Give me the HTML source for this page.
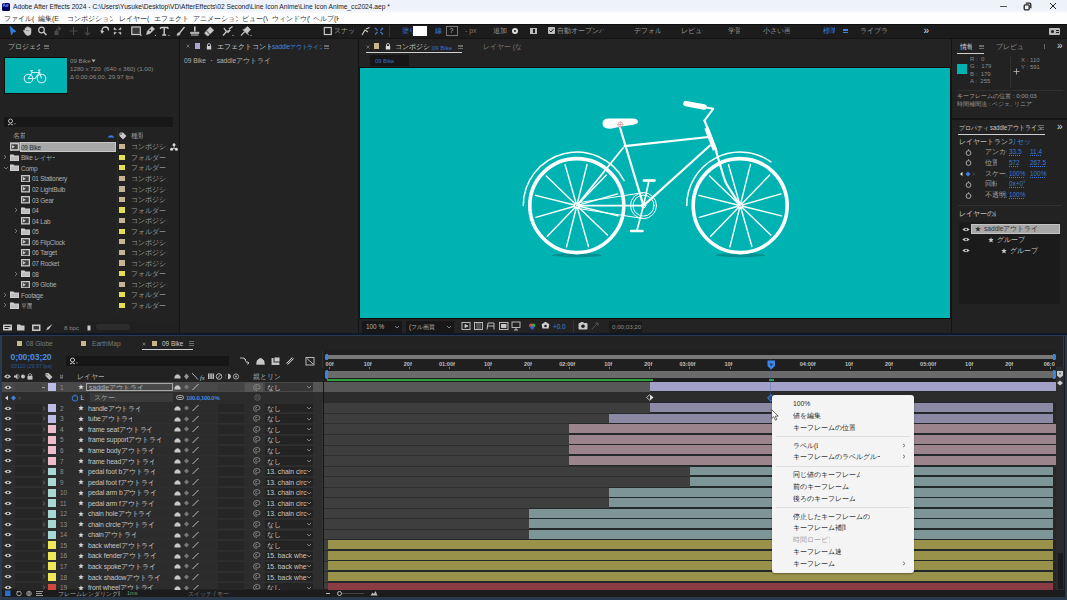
<!DOCTYPE html>
<html><head><meta charset="utf-8">
<style>
*{margin:0;padding:0;box-sizing:border-box}
html,body{width:1067px;height:600px;overflow:hidden;background:#111}
body{position:relative;font-family:"Liberation Sans",sans-serif;font-size:7px;color:#a8a8a8;line-height:1}
.a{position:absolute}
.t{position:absolute;white-space:nowrap;line-height:8px}
.blue{color:#4d8fe0}
</style></head><body>


<!-- TITLE BAR -->
<div class="a" style="left:0;top:0;width:1067px;height:23.5px;background:linear-gradient(#eef2fa 0px,#eef2fa 10px,#fefefe 13.5px,#fefefe 23.5px)"></div>
<div class="a" style="left:1.5px;top:2.5px;width:8px;height:8px;background:#00005b;border-radius:1.5px"></div>
<div class="t" style="left:2.6px;top:2.4px;font-size:4.6px;color:#9999ff;font-weight:bold;line-height:8px">Ae</div>
<div class="t" style="left:13px;top:2.5px;font-size:7.4px;color:#1a1a1a;transform-origin:0 0;transform:scaleX(0.9)">Adobe After Effects 2024 - C:\Users\Yusuke\Desktop\VD\AfterEffects\02 Second\Line Icon Anime\Line Icon Anime_cc2024.aep *</div>
<div class="a" style="left:999.5px;top:5.5px;width:7px;height:0.8px;background:#555"></div>
<svg class="a" style="left:1022.5px;top:1.5px" width="9" height="9" viewBox="0 0 9 9"><path d="M2.8 1.2H6.5Q7.8 1.2 7.8 2.5V6.2" fill="none" stroke="#222" stroke-width="1.3"/><rect x="1.2" y="2.8" width="5" height="5" rx="1" fill="none" stroke="#222" stroke-width="1.3"/></svg>
<svg class="a" style="left:1049px;top:2px" width="8" height="8" viewBox="0 0 8 8"><path d="M1 1L7 7M7 1L1 7" stroke="#222" stroke-width="1"/></svg>
<!-- MENU -->
<div class="t" style="width:29.5px;overflow:hidden;left:4px;top:14.5px;font-size:7px;color:#333">ファイル(F)</div>
<div class="t" style="width:20.5px;overflow:hidden;left:38px;top:14.5px;font-size:7px;color:#333">編集(E)</div>
<div class="t" style="width:45.5px;overflow:hidden;left:67px;top:14.5px;font-size:7px;color:#333">コンポジション(C)</div>
<div class="t" style="width:29.5px;overflow:hidden;left:119px;top:14.5px;font-size:7px;color:#333">レイヤー(L)</div>
<div class="t" style="width:34.5px;overflow:hidden;left:154px;top:14.5px;font-size:7px;color:#333">エフェクト(T)</div>
<div class="t" style="width:45.5px;overflow:hidden;left:192.5px;top:14.5px;font-size:7px;color:#333">アニメーション(A)</div>
<div class="t" style="width:25.5px;overflow:hidden;left:242px;top:14.5px;font-size:7px;color:#333">ビュー(V)</div>
<div class="t" style="width:37.5px;overflow:hidden;left:272px;top:14.5px;font-size:7px;color:#333">ウィンドウ(W)</div>
<div class="t" style="width:25.5px;overflow:hidden;left:313px;top:14.5px;font-size:7px;color:#333">ヘルプ(H)</div>

<!-- TOOLBAR -->
<div class="a" style="left:0;top:23.5px;width:1067px;height:15.5px;background:#1c1c1c;border-top:1px solid #0c0c0c"></div>
<svg class="a" style="left:0;top:24px" width="400" height="14" viewBox="0 0 400 14">
 <g fill="none" stroke="#c8c8c8" stroke-width="1.1">
  <path d="M10 2.5L16 7.5L13 8L11.5 11Z" fill="#2f7de1" stroke="#2f7de1" stroke-width="0.8"/>
  <path d="M25 7.5V4.8Q25 4 25.8 4Q26.5 4 26.5 4.8V6.5M26.5 6V3.5Q26.5 2.7 27.3 2.7Q28 2.7 28 3.5V6.2M28 6V3.8Q28 3 28.8 3Q29.5 3 29.5 3.8V6.5M29.5 6.3V4.8Q29.5 4.1 30.2 4.1Q31 4.1 31 4.8V8.5Q31 11.5 28 11.5Q26 11.5 25 9.5L23.5 7Q23.2 6.2 24 6.2Q24.6 6.2 25 7" fill="#c8c8c8" stroke-width="0.5"/>
  <circle cx="41.5" cy="6" r="2.8" stroke-width="1.2"/><path d="M43.5 8L46.5 11" stroke-width="1.5"/>
  <g stroke="#4a4a4a"><path d="M56 9Q55.5 4.5 60 4.5M58 2.5L60.5 4.5L58.5 6.5"/><rect x="55" y="7.5" width="3" height="3" fill="#4a4a4a"/><path d="M73.5 3V11M69.5 7H77.5"/><path d="M87.5 3V10.5M85 8.5L87.5 11L90 8.5"/></g>
  <path d="M102 8Q101.5 3 105.5 3Q108.5 3 108.5 6.5" stroke-width="1.3"/><path d="M100.5 6.5L102 9.5L104 7" fill="#c8c8c8" stroke-width="0.5"/>
  <path d="M114 3.5L116.5 5.5L114 5.8ZM121 3.5L118.5 5.5L121 5.8ZM114 10.5L116.5 8.5L114 8.2ZM121 10.5L118.5 8.5L121 8.2Z" fill="#c8c8c8" stroke-width="0.4"/>
  <rect x="131.8" y="3" width="8.5" height="7.5" fill="#3a3a3a" stroke-width="1.2"/><circle cx="141" cy="11.3" r="0.8" fill="#c8c8c8" stroke="none"/>
  <path d="M146.5 10.5L147.5 7L152 2.5L154.5 5L150 9.5Z" fill="#c8c8c8" stroke-width="0.6"/><circle cx="150.2" cy="6.3" r="0.9" fill="#1d1d1d" stroke="none"/><circle cx="155.5" cy="11.3" r="0.6" fill="#c8c8c8" stroke="none"/>
  <path d="M160.5 3.5H168M164.2 3.5V11M162.3 11H166.2M160.5 3.5V5M168 3.5V5" stroke-width="1.4"/><circle cx="169" cy="11.3" r="0.6" fill="#c8c8c8" stroke="none"/>
  <path d="M179.5 9L184.5 3" stroke-width="1.3"/><path d="M177 11.5Q177 9 179 8.5L180.3 9.7Q180 11.5 177 11.5Z" fill="#c8c8c8" stroke-width="0.5"/>
  <path d="M194.8 2.5V7.5" stroke-width="1.6"/><path d="M190.5 8.2H199V9.5H190.5Z" fill="#c8c8c8" stroke-width="0.6"/><path d="M191 11H198.5" stroke-width="1"/>
  <path d="M205 8.5L209.5 3.5Q210.3 2.8 211 3.5L213.2 5.7Q213.9 6.4 213.2 7.1L208.5 11.5Q207.8 12.2 207 11.5L205 9.8Q204.3 9.1 205 8.5Z" fill="#c8c8c8" stroke-width="0.5"/><path d="M206.5 7L210.5 11" stroke="#1d1d1d" stroke-width="0.8"/>
  <path d="M223 11.5L227.5 6.5M229 5L232.5 2.5M224 4L226.5 8" stroke-width="1.3"/><path d="M227 8L229.5 5.5L230.5 6.5L228 9Z" fill="#c8c8c8" stroke-width="0.5"/><circle cx="233" cy="11.3" r="0.6" fill="#c8c8c8" stroke="none"/>
  <path d="M241 11.5L244.8 7.7" stroke-width="1.1"/><path d="M243.5 6L247.5 2.5L250.5 5.5L247 9.5Z" fill="#c8c8c8" stroke-width="0.6"/><path d="M242.8 5.2L248.8 11.2" stroke-width="1"/><circle cx="251" cy="11.3" r="0.6" fill="#c8c8c8" stroke="none"/>
  <rect x="324.3" y="3.5" width="7" height="7" stroke-width="1.2"/>
  <path d="M362 11L365 6L368 8M366 5L369.5 3.5" stroke="#d0d0d0"/>
  <path d="M375 4L377.5 6.5M383 4L380.5 6.5M375 10.5L377.5 8M383 10.5L380.5 8" stroke="#3b7fd8"/>
 </g>
</svg>
<div class="t" style="width:21.5px;overflow:hidden;left:333.5px;top:27px;font-size:6.8px;color:#9a9a9a">スナップ</div>
<div class="a" style="left:389px;top:25px;width:0.8px;height:12px;background:#333"></div>
<div class="t" style="width:11.5px;overflow:hidden;left:402px;top:27px;font-size:6.8px;color:#3b82e0">塗り</div>
<div class="a" style="left:413px;top:26px;width:14px;height:10px;background:#fff"></div>
<div class="t" style="width:6.5px;overflow:hidden;left:435px;top:27px;font-size:6.8px;color:#3b82e0">線</div>
<div class="a" style="left:446px;top:26px;width:11.5px;height:10px;border:1px solid #777;background:#1a1a1a"></div>
<div class="t" style="left:449.5px;top:27px;font-size:7px;color:#bbb">?</div>
<div class="t" style="left:465px;top:27px;font-size:6.8px;color:#777">- px</div>
<div class="t" style="width:15.5px;overflow:hidden;left:493px;top:27px;font-size:6.8px;color:#999">追加 :</div>
<div class="a" style="left:512px;top:28px;width:6px;height:6px;border-radius:50%;background:#ddd"></div>
<div class="a" style="left:514px;top:30px;width:2px;height:2px;border-radius:50%;background:#1d1d1d"></div>
<div class="a" style="left:530px;top:27.5px;width:7px;height:6px;background:#bbb"></div>
<div class="a" style="left:532.5px;top:29px;width:2px;height:4px;background:#1d1d1d"></div>
<div class="a" style="left:547.5px;top:27px;width:7px;height:7px;background:#c0c0c0;border-radius:1px"></div>
<svg class="a" style="left:547.5px;top:27px" width="7" height="7"><path d="M1.5 3.5L3 5L5.5 2" stroke="#1d1d1d" stroke-width="1" fill="none"/></svg>
<div class="t" style="width:46.5px;overflow:hidden;left:557px;top:27px;font-size:6.8px;color:#999">自動オープンパネル</div>
<div class="t" style="width:26.5px;overflow:hidden;left:634px;top:27px;font-size:6.8px;color:#999">デフォルト</div>
<div class="t" style="width:21.5px;overflow:hidden;left:681px;top:27px;font-size:6.8px;color:#999">レビュー</div>
<div class="t" style="width:11.5px;overflow:hidden;left:728px;top:27px;font-size:6.8px;color:#999">学習</div>
<div class="t" style="width:26.5px;overflow:hidden;left:763px;top:27px;font-size:6.8px;color:#999">小さい画面</div>
<div class="t" style="width:11.5px;overflow:hidden;left:823px;top:27px;font-size:6.8px;color:#3b82e0">標準</div>
<div class="a" style="left:842.5px;top:28.5px;width:5px;height:4.5px;border-top:0.8px solid #3b82e0;border-bottom:0.8px solid #3b82e0"></div><div class="a" style="left:842.5px;top:30.4px;width:5px;height:0.8px;background:#3b82e0"></div>
<div class="t" style="width:26.5px;overflow:hidden;left:860px;top:27px;font-size:6.8px;color:#999">ライブラリ</div>
<div class="t" style="left:923.5px;top:25.5px;font-size:10px;color:#ddd;line-height:10px">»</div>
<div class="a" style="left:1049px;top:28px;width:11px;height:7px;background:#bbb;border-radius:1px"></div>
<div class="a" style="left:1051px;top:30px;width:3px;height:3px;background:#1d1d1d;border-radius:50%"></div>
<div class="a" style="left:1056px;top:29.5px;width:3px;height:1px;background:#1d1d1d"></div>
<div class="a" style="left:1056px;top:31.5px;width:3px;height:1px;background:#1d1d1d"></div>

<!-- PANEL AREA BG (gaps) -->
<div class="a" style="left:0;top:38px;width:1067px;height:297px;background:#141414"></div>


<!-- PROJECT PANEL -->
<div class="a" style="left:0;top:39px;width:178.8px;height:295px;background:#222222"></div>
<div class="t" style="width:31.5px;overflow:hidden;left:8px;top:43.00px;font-size:7px;color:#b0b0b0">プロジェクト</div>
<div class="a" style="left:44px;top:44.5px;width:5px;height:4.5px;border-top:0.8px solid #6a6a6a;border-bottom:0.8px solid #6a6a6a"></div><div class="a" style="left:44px;top:46.4px;width:5px;height:0.8px;background:#6a6a6a"></div>
<div class="a" style="left:4px;top:57px;width:63.5px;height:37px;background:#0d0d0d"></div>
<div class="a" style="left:5px;top:58px;width:61.5px;height:35px;background:#00b3b3"></div>
<svg class="a" style="left:23px;top:68px" width="24" height="16" viewBox="0 0 24 16"><g fill="none" stroke="#c8f0f0" stroke-width="1.1"><circle cx="5.5" cy="10.5" r="4.3"/><circle cx="18.5" cy="10.5" r="4.3"/><path d="M5.5 10.5L9 4.5H16.5L12 10.5ZM9 4.5L8.3 2.5M7 2.5H10M16.5 4.5L18.5 10.5M15.8 2.5L16.5 4.5M15 2H17.5"/></g></svg>
<div class="t" style="left:70px;top:57.00px;font-size:6.2px;color:#8a8a8a">09 Bike</div><svg class="a" style="left:91px;top:59px" width="5" height="4" viewBox="0 0 5 4"><path d="M0.5 0.5H4.5L2.5 3.5Z" fill="#aaa"/></svg>
<div class="t" style="left:70px;top:65.00px;font-size:6.2px;color:#8a8a8a;letter-spacing:0px">1280 x 720&nbsp; (640 x 360) (1.00)</div>
<div class="t" style="left:70px;top:73.00px;font-size:6.2px;color:#8a8a8a;letter-spacing:0px">Δ 0;00;06;00, 29.97 fps</div>
<div class="a" style="left:4px;top:117px;width:169px;height:9.7px;background:#171717"></div>
<svg class="a" style="left:7px;top:118px" width="10" height="8" viewBox="0 0 10 8"><circle cx="3.5" cy="3" r="2" fill="none" stroke="#bbb" stroke-width="1"/><path d="M1 7Q3.5 4.5 6 7" fill="none" stroke="#bbb" stroke-width="1"/><path d="M7 5.5L8 6.5L9 5.5" fill="#bbb"/></svg>
<div class="t" style="width:11.5px;overflow:hidden;left:13px;top:132.00px;font-size:7px;color:#a0a0a0">名前</div>
<svg class="a" style="left:107px;top:133px" width="8" height="5" viewBox="0 0 8 5"><path d="M0.5 4.5Q4 0 7.5 4.5Z" fill="#3b82e0"/></svg>
<svg class="a" style="left:119px;top:131.5px" width="8" height="8" viewBox="0 0 8 8"><path d="M0.5 1.5V4L4 7.5L7.5 4L4 0.5H1.5Z" fill="#c8c8c8"/><circle cx="2" cy="2" r="0.7" fill="#212121"/></svg>
<div class="t" style="width:11.5px;overflow:hidden;left:131px;top:132.00px;font-size:7px;color:#a0a0a0">種類</div>
<div class="a" style="left:117px;top:128px;width:0.6px;height:186px;background:#2a2a2a"></div>

<div class="a" style="left:10px;top:142.10px;width:9.5px;height:9px;background:#8c8c8c"></div>
<div class="a" style="left:20px;top:141.60px;width:96px;height:10px;background:#a8a8a8;border:0.7px solid #c8c8c8"></div>
<svg class="a" style="left:10.00px;top:143.10px" width="9" height="7.5" viewBox="0 0 9 7.5"><rect x="0" y="0" width="9" height="7.5" fill="#c8c8c8"/><rect x="1.3" y="1.3" width="6.4" height="4.9" fill="#3c3c3c"/><path d="M2 2V5.5L5 3.8Z" fill="#c8c8c8"/></svg>
<div class="t" style="left:21.00px;top:143.60px;font-size:6.4px;color:#2a2a2a;letter-spacing:-0.2px">09 Bike</div>
<div class="a" style="left:119px;top:144.00px;width:5.5px;height:5.2px;background:#c4b597"></div>
<div class="t" style="left:131px;top:143.30px;font-size:7px;color:#9a9a9a;width:37px;overflow:hidden">コンポジション</div>
<svg class="a" style="left:3.00px;top:154.18px" width="4" height="6" viewBox="0 0 4 6"><path d="M1 1L3 3L1 5" fill="none" stroke="#8a8a8a" stroke-width="0.8"/></svg>
<svg class="a" style="left:10.00px;top:153.68px" width="9" height="7" viewBox="0 0 9 7"><path d="M0 0.5H3.5L4.3 1.5H9V7H0Z" fill="#d2d2d2"/><path d="M0.8 2.5H8.2V6.2H0.8Z" fill="#bcbcbc"/></svg>
<div class="t" style="width:33.7px;overflow:hidden;left:21.00px;top:154.18px;font-size:6.4px;color:#b0b0b0;letter-spacing:-0.2px">Bike レイヤー</div>
<div class="a" style="left:119px;top:154.58px;width:5.5px;height:5.2px;background:#e3df55"></div>
<div class="t" style="left:131px;top:153.88px;font-size:7px;color:#9a9a9a;width:37px;overflow:hidden">フォルダー</div>
<svg class="a" style="left:2.50px;top:165.76px" width="6" height="4" viewBox="0 0 6 4"><path d="M1 1L3 3L5 1" fill="none" stroke="#8a8a8a" stroke-width="0.8"/></svg>
<svg class="a" style="left:10.00px;top:164.26px" width="9" height="7" viewBox="0 0 9 7"><path d="M0 0.5H3.5L4.3 1.5H9V7H0Z" fill="#d2d2d2"/><path d="M0.8 2.5H8.2V6.2H0.8Z" fill="#bcbcbc"/></svg>
<div class="t" style="left:21.00px;top:164.76px;font-size:6.4px;color:#b0b0b0;letter-spacing:-0.2px">Comp</div>
<div class="a" style="left:119px;top:165.16px;width:5.5px;height:5.2px;background:#e3df55"></div>
<div class="t" style="left:131px;top:164.46px;font-size:7px;color:#9a9a9a;width:37px;overflow:hidden">フォルダー</div>
<svg class="a" style="left:21.00px;top:174.84px" width="9" height="7.5" viewBox="0 0 9 7.5"><rect x="0" y="0" width="9" height="7.5" fill="#c8c8c8"/><rect x="1.3" y="1.3" width="6.4" height="4.9" fill="#3c3c3c"/><path d="M2 2V5.5L5 3.8Z" fill="#c8c8c8"/></svg>
<div class="t" style="left:32.00px;top:175.34px;font-size:6.4px;color:#b0b0b0;letter-spacing:-0.2px">01 Stationery</div>
<div class="a" style="left:119px;top:175.74px;width:5.5px;height:5.2px;background:#c4b597"></div>
<div class="t" style="left:131px;top:175.04px;font-size:7px;color:#9a9a9a;width:37px;overflow:hidden">コンポジション</div>
<svg class="a" style="left:21.00px;top:185.42px" width="9" height="7.5" viewBox="0 0 9 7.5"><rect x="0" y="0" width="9" height="7.5" fill="#c8c8c8"/><rect x="1.3" y="1.3" width="6.4" height="4.9" fill="#3c3c3c"/><path d="M2 2V5.5L5 3.8Z" fill="#c8c8c8"/></svg>
<div class="t" style="left:32.00px;top:185.92px;font-size:6.4px;color:#b0b0b0;letter-spacing:-0.2px">02 LightBulb</div>
<div class="a" style="left:119px;top:186.32px;width:5.5px;height:5.2px;background:#c4b597"></div>
<div class="t" style="left:131px;top:185.62px;font-size:7px;color:#9a9a9a;width:37px;overflow:hidden">コンポジション</div>
<svg class="a" style="left:21.00px;top:196.00px" width="9" height="7.5" viewBox="0 0 9 7.5"><rect x="0" y="0" width="9" height="7.5" fill="#c8c8c8"/><rect x="1.3" y="1.3" width="6.4" height="4.9" fill="#3c3c3c"/><path d="M2 2V5.5L5 3.8Z" fill="#c8c8c8"/></svg>
<div class="t" style="left:32.00px;top:196.50px;font-size:6.4px;color:#b0b0b0;letter-spacing:-0.2px">03 Gear</div>
<div class="a" style="left:119px;top:196.90px;width:5.5px;height:5.2px;background:#c4b597"></div>
<div class="t" style="left:131px;top:196.20px;font-size:7px;color:#9a9a9a;width:37px;overflow:hidden">コンポジション</div>
<svg class="a" style="left:14.00px;top:207.08px" width="4" height="6" viewBox="0 0 4 6"><path d="M1 1L3 3L1 5" fill="none" stroke="#8a8a8a" stroke-width="0.8"/></svg>
<svg class="a" style="left:21.00px;top:206.58px" width="9" height="7" viewBox="0 0 9 7"><path d="M0 0.5H3.5L4.3 1.5H9V7H0Z" fill="#d2d2d2"/><path d="M0.8 2.5H8.2V6.2H0.8Z" fill="#bcbcbc"/></svg>
<div class="t" style="left:32.00px;top:207.08px;font-size:6.4px;color:#b0b0b0;letter-spacing:-0.2px">04</div>
<div class="a" style="left:119px;top:207.48px;width:5.5px;height:5.2px;background:#e3df55"></div>
<div class="t" style="left:131px;top:206.78px;font-size:7px;color:#9a9a9a;width:37px;overflow:hidden">フォルダー</div>
<svg class="a" style="left:21.00px;top:217.16px" width="9" height="7.5" viewBox="0 0 9 7.5"><rect x="0" y="0" width="9" height="7.5" fill="#c8c8c8"/><rect x="1.3" y="1.3" width="6.4" height="4.9" fill="#3c3c3c"/><path d="M2 2V5.5L5 3.8Z" fill="#c8c8c8"/></svg>
<div class="t" style="left:32.00px;top:217.66px;font-size:6.4px;color:#b0b0b0;letter-spacing:-0.2px">04 Lab</div>
<div class="a" style="left:119px;top:218.06px;width:5.5px;height:5.2px;background:#c4b597"></div>
<div class="t" style="left:131px;top:217.36px;font-size:7px;color:#9a9a9a;width:37px;overflow:hidden">コンポジション</div>
<svg class="a" style="left:14.00px;top:228.24px" width="4" height="6" viewBox="0 0 4 6"><path d="M1 1L3 3L1 5" fill="none" stroke="#8a8a8a" stroke-width="0.8"/></svg>
<svg class="a" style="left:21.00px;top:227.74px" width="9" height="7" viewBox="0 0 9 7"><path d="M0 0.5H3.5L4.3 1.5H9V7H0Z" fill="#d2d2d2"/><path d="M0.8 2.5H8.2V6.2H0.8Z" fill="#bcbcbc"/></svg>
<div class="t" style="left:32.00px;top:228.24px;font-size:6.4px;color:#b0b0b0;letter-spacing:-0.2px">05</div>
<div class="a" style="left:119px;top:228.64px;width:5.5px;height:5.2px;background:#e3df55"></div>
<div class="t" style="left:131px;top:227.94px;font-size:7px;color:#9a9a9a;width:37px;overflow:hidden">フォルダー</div>
<svg class="a" style="left:21.00px;top:238.32px" width="9" height="7.5" viewBox="0 0 9 7.5"><rect x="0" y="0" width="9" height="7.5" fill="#c8c8c8"/><rect x="1.3" y="1.3" width="6.4" height="4.9" fill="#3c3c3c"/><path d="M2 2V5.5L5 3.8Z" fill="#c8c8c8"/></svg>
<div class="t" style="left:32.00px;top:238.82px;font-size:6.4px;color:#b0b0b0;letter-spacing:-0.2px">06 FlipClock</div>
<div class="a" style="left:119px;top:239.22px;width:5.5px;height:5.2px;background:#c4b597"></div>
<div class="t" style="left:131px;top:238.52px;font-size:7px;color:#9a9a9a;width:37px;overflow:hidden">コンポジション</div>
<svg class="a" style="left:21.00px;top:248.90px" width="9" height="7.5" viewBox="0 0 9 7.5"><rect x="0" y="0" width="9" height="7.5" fill="#c8c8c8"/><rect x="1.3" y="1.3" width="6.4" height="4.9" fill="#3c3c3c"/><path d="M2 2V5.5L5 3.8Z" fill="#c8c8c8"/></svg>
<div class="t" style="left:32.00px;top:249.40px;font-size:6.4px;color:#b0b0b0;letter-spacing:-0.2px">06 Target</div>
<div class="a" style="left:119px;top:249.80px;width:5.5px;height:5.2px;background:#c4b597"></div>
<div class="t" style="left:131px;top:249.10px;font-size:7px;color:#9a9a9a;width:37px;overflow:hidden">コンポジション</div>
<svg class="a" style="left:21.00px;top:259.48px" width="9" height="7.5" viewBox="0 0 9 7.5"><rect x="0" y="0" width="9" height="7.5" fill="#c8c8c8"/><rect x="1.3" y="1.3" width="6.4" height="4.9" fill="#3c3c3c"/><path d="M2 2V5.5L5 3.8Z" fill="#c8c8c8"/></svg>
<div class="t" style="left:32.00px;top:259.98px;font-size:6.4px;color:#b0b0b0;letter-spacing:-0.2px">07 Rocket</div>
<div class="a" style="left:119px;top:260.38px;width:5.5px;height:5.2px;background:#c4b597"></div>
<div class="t" style="left:131px;top:259.68px;font-size:7px;color:#9a9a9a;width:37px;overflow:hidden">コンポジション</div>
<svg class="a" style="left:14.00px;top:270.56px" width="4" height="6" viewBox="0 0 4 6"><path d="M1 1L3 3L1 5" fill="none" stroke="#8a8a8a" stroke-width="0.8"/></svg>
<svg class="a" style="left:21.00px;top:270.06px" width="9" height="7" viewBox="0 0 9 7"><path d="M0 0.5H3.5L4.3 1.5H9V7H0Z" fill="#d2d2d2"/><path d="M0.8 2.5H8.2V6.2H0.8Z" fill="#bcbcbc"/></svg>
<div class="t" style="left:32.00px;top:270.56px;font-size:6.4px;color:#b0b0b0;letter-spacing:-0.2px">08</div>
<div class="a" style="left:119px;top:270.96px;width:5.5px;height:5.2px;background:#e3df55"></div>
<div class="t" style="left:131px;top:270.26px;font-size:7px;color:#9a9a9a;width:37px;overflow:hidden">フォルダー</div>
<svg class="a" style="left:21.00px;top:280.64px" width="9" height="7.5" viewBox="0 0 9 7.5"><rect x="0" y="0" width="9" height="7.5" fill="#c8c8c8"/><rect x="1.3" y="1.3" width="6.4" height="4.9" fill="#3c3c3c"/><path d="M2 2V5.5L5 3.8Z" fill="#c8c8c8"/></svg>
<div class="t" style="left:32.00px;top:281.14px;font-size:6.4px;color:#b0b0b0;letter-spacing:-0.2px">09 Globe</div>
<div class="a" style="left:119px;top:281.54px;width:5.5px;height:5.2px;background:#c4b597"></div>
<div class="t" style="left:131px;top:280.84px;font-size:7px;color:#9a9a9a;width:37px;overflow:hidden">コンポジション</div>
<svg class="a" style="left:3.00px;top:291.72px" width="4" height="6" viewBox="0 0 4 6"><path d="M1 1L3 3L1 5" fill="none" stroke="#8a8a8a" stroke-width="0.8"/></svg>
<svg class="a" style="left:10.00px;top:291.22px" width="9" height="7" viewBox="0 0 9 7"><path d="M0 0.5H3.5L4.3 1.5H9V7H0Z" fill="#d2d2d2"/><path d="M0.8 2.5H8.2V6.2H0.8Z" fill="#bcbcbc"/></svg>
<div class="t" style="left:21.00px;top:291.72px;font-size:6.4px;color:#b0b0b0;letter-spacing:-0.2px">Footage</div>
<div class="a" style="left:119px;top:292.12px;width:5.5px;height:5.2px;background:#e3df55"></div>
<div class="t" style="left:131px;top:291.42px;font-size:7px;color:#9a9a9a;width:37px;overflow:hidden">フォルダー</div>
<svg class="a" style="left:3.00px;top:302.30px" width="4" height="6" viewBox="0 0 4 6"><path d="M1 1L3 3L1 5" fill="none" stroke="#8a8a8a" stroke-width="0.8"/></svg>
<svg class="a" style="left:10.00px;top:301.80px" width="9" height="7" viewBox="0 0 9 7"><path d="M0 0.5H3.5L4.3 1.5H9V7H0Z" fill="#d2d2d2"/><path d="M0.8 2.5H8.2V6.2H0.8Z" fill="#bcbcbc"/></svg>
<div class="t" style="width:11.1px;overflow:hidden;left:21.00px;top:302.30px;font-size:6.4px;color:#b0b0b0;letter-spacing:-0.2px">平面</div>
<div class="a" style="left:119px;top:302.70px;width:5.5px;height:5.2px;background:#e3df55"></div>
<div class="t" style="left:131px;top:302.00px;font-size:7px;color:#9a9a9a;width:37px;overflow:hidden">フォルダー</div>
<svg class="a" style="left:169.5px;top:142.5px" width="8" height="8" viewBox="0 0 8 8"><g fill="#d8d8d8"><circle cx="4" cy="1.8" r="1.5"/><circle cx="1.6" cy="6.3" r="1.5"/><circle cx="6.4" cy="6.3" r="1.5"/><path d="M3.6 3H4.4V5H6V5.7H2V5H3.6Z"/></g></svg>

<div class="a" style="left:0;top:321px;width:178.8px;height:13px;background:#202020"></div>
<svg class="a" style="left:2px;top:323px" width="130" height="9" viewBox="0 0 130 9"><g fill="#c8c8c8">
<rect x="1" y="1.5" width="9" height="6" rx="0.5"/><rect x="2.5" y="3" width="6" height="1" fill="#1e1e1e"/><rect x="2.5" y="5" width="4" height="1" fill="#1e1e1e"/>
<path d="M15 1.5H18L19 2.5H22.5V7.5H15Z"/>
<rect x="30" y="1.5" width="8.5" height="6.5"/><rect x="31.5" y="3" width="5.5" height="3.5" fill="#3a3a3a"/>
<path d="M44 7.5L45.5 4.5L50.5 1L47 6Z"/>
<path d="M85 2H89M85.5 2.5V7.5H88.5V2.5"/>
</g></svg>
<div class="t" style="left:64px;top:323.50px;font-size:6.2px;color:#8a8a8a">8 bpc</div>
<div class="a" style="left:96px;top:324px;width:34px;height:6px;background:#2c2c2c;border-radius:3px"></div>

<!-- EFFECT CONTROLS -->
<div class="a" style="left:180px;top:39px;width:177.5px;height:295px;background:#232323"></div>
<svg class="a" style="left:186px;top:44px" width="4" height="4" viewBox="0 0 4 4"><path d="M0.5 0.5L3.5 3.5M3.5 0.5L0.5 3.5" stroke="#888" stroke-width="0.7"/></svg>
<div class="a" style="left:194.5px;top:43px;width:5px;height:6px;background:#a9a6d0"></div>
<svg class="a" style="left:206px;top:42.5px" width="6" height="7" viewBox="0 0 6 7"><path d="M1.5 3V2Q1.5 0.5 3 0.5Q4.5 0.5 4.5 2V3" fill="none" stroke="#ccc" stroke-width="0.9"/><rect x="0.8" y="3" width="4.4" height="3.5" fill="#ccc"/></svg>
<div class="t" style="width:56.5px;overflow:hidden;left:217px;top:43px;font-size:6.6px;color:#c8c8c8">エフェクトコントロール</div>
<div class="t" style="width:49.7px;overflow:hidden;left:272px;top:43px;font-size:6.4px;color:#3f85dd;letter-spacing:-0.15px">saddleアウトライン</div>
<div class="a" style="left:324px;top:44.5px;width:5px;height:4.5px;border-top:0.8px solid #6a6a6a;border-bottom:0.8px solid #6a6a6a"></div>
<div class="a" style="left:324px;top:46.4px;width:5px;height:0.8px;background:#6a6a6a"></div>
<div class="t" style="width:87.5px;overflow:hidden;left:184px;top:56.5px;font-size:6.6px;color:#b0b0b0">09 Bike ・ saddleアウトライン</div>
<!-- COMPOSITION -->
<div class="a" style="left:358.6px;top:39px;width:592.4px;height:295px;background:#232323"></div>
<svg class="a" style="left:365.5px;top:45px" width="4" height="4" viewBox="0 0 4 4"><path d="M0.5 0.5L3.5 3.5M3.5 0.5L0.5 3.5" stroke="#888" stroke-width="0.7"/></svg>
<div class="a" style="left:373.5px;top:43px;width:5.5px;height:6px;background:#c9b68f"></div>
<svg class="a" style="left:385px;top:42.5px" width="6" height="7" viewBox="0 0 6 7"><path d="M1.5 3V2Q1.5 0.5 3 0.5Q4.5 0.5 4.5 2V3" fill="none" stroke="#ddd" stroke-width="0.9"/><rect x="0.8" y="3" width="4.4" height="3.5" fill="#ddd"/></svg>
<div class="t" style="width:36.5px;overflow:hidden;left:395px;top:43px;font-size:6.8px;color:#c8c8c8">コンポジション</div>
<div class="t" style="left:432px;top:43.5px;font-size:6px;color:#3a70c8">09 Bike</div>
<div class="a" style="left:458px;top:44.5px;width:5px;height:4.5px;border-top:0.8px solid #6a6a6a;border-bottom:0.8px solid #6a6a6a"></div>
<div class="a" style="left:458px;top:46.4px;width:5px;height:0.8px;background:#6a6a6a"></div>
<div class="a" style="left:366px;top:52px;width:96px;height:1.2px;background:#d0d0d0"></div>
<div class="t" style="width:37.5px;overflow:hidden;left:483px;top:43px;font-size:6.6px;color:#777">レイヤー (なし)</div>
<div class="a" style="left:369.5px;top:55px;width:39px;height:10.5px;background:#161616"></div>
<div class="t" style="left:375px;top:57px;font-size:5.8px;color:#3a70c8">09 Bike</div>
<div class="a" style="left:358.7px;top:66.8px;width:592px;height:252.5px;background:#0c0c0c"></div><div class="a" style="left:359.8px;top:67.8px;width:589.8px;height:250.3px;background:#00b3b3"></div>
<svg class="a" style="left:360px;top:67px" width="590" height="251.5" viewBox="360 67 590 251.5">
<ellipse cx="576.8" cy="255.2" rx="25" ry="2" fill="#05908f"/>
<ellipse cx="740.2" cy="255.2" rx="25" ry="2" fill="#05908f"/>
<g fill="none" stroke="#ffffff" stroke-linecap="round" stroke-linejoin="round">
 <circle cx="576.8" cy="205.6" r="47" stroke-width="3.6"/>
 <circle cx="740.2" cy="205.6" r="47" stroke-width="3.6"/>
 <path d="M579.23 206.20L618.04 215.88M578.60 207.34L607.37 235.12M577.49 208.00L588.51 246.45M576.20 208.03L566.52 246.84M575.06 207.40L547.28 236.17M574.40 206.29L535.95 217.31M574.37 205.00L535.56 195.32M575.00 203.86L546.23 176.08M576.11 203.20L565.09 164.75M577.40 203.17L587.08 164.36M578.54 203.80L606.32 175.03M579.20 204.91L617.65 193.89" stroke-width="1.4"/>
 <path d="M742.63 206.20L781.44 215.88M742.00 207.34L770.77 235.12M740.89 208.00L751.91 246.45M739.60 208.03L729.92 246.84M738.46 207.40L710.68 236.17M737.80 206.29L699.35 217.31M737.77 205.00L698.96 195.32M738.40 203.86L709.63 176.08M739.51 203.20L728.49 164.75M740.80 203.17L750.48 164.36M741.94 203.80L769.72 175.03M742.60 204.91L781.05 193.89" stroke-width="1.4"/>
 <circle cx="576.8" cy="205.6" r="2.4" stroke-width="1.6"/>
 <circle cx="740.2" cy="205.6" r="2.4" stroke-width="1.6"/>
 <path d="M523.30 205.60A53.5 53.5 0 0 1 624.04 180.48" stroke-width="1.5"/>
 <path d="M686.70 205.60A53.5 53.5 0 0 1 770.89 161.78" stroke-width="1.5"/>
 <circle cx="643.5" cy="205.6" r="13" stroke-width="1"/>
 <circle cx="643.5" cy="205.6" r="10.5" stroke-width="1"/>
 <circle cx="643.5" cy="205.6" r="2.3" stroke-width="1"/>
 <path d="M578.8 202.6L643.5 192.6M578.8 208.6L643.5 218.6" stroke-width="1"/>
 <path d="M576.8 205.6L643.5 205.6" stroke-width="1.8"/>
 <path d="M623 148L576.8 205.6" stroke-width="1.8"/>
 <path d="M619.5 126L643.5 205.6" stroke-width="2.2"/>
 <path d="M624.5 146.2L708.5 137" stroke-width="2.2"/>
 <path d="M710 145.5L643.5 205.6" stroke-width="2.2"/>
 <path d="M704.5 120.5L716.5 151.5" stroke-width="2.2"/>
 <path d="M706.5 128L715 150" stroke-width="4.6" stroke-linecap="butt"/>
 <path d="M716 151L724.2 178.5Q725.5 183 729 188L740.2 205.6" stroke-width="2.2"/>
 <path d="M704.5 120.5L713.2 108.8L706 107.5" stroke-width="2"/>
 <path d="M686 103.6L704 107" stroke-width="5.5"/>
 <path d="M643.5 205.6L649 180.5M643.8 180.5H654.5" stroke-width="1.7"/>
 <path d="M643.8 180.5H654.5" stroke-width="2.4"/>
 <path d="M643.5 205.6L636.8 231M631 231H642.5" stroke-width="1.7"/>
 <path d="M631 231H642.5" stroke-width="2.4"/>
</g>
<path d="M602.5 123.5Q602.5 118.4 609 118.4L633 118.6Q638 118.8 638 122Q637.5 124.6 630 125.2Q620 126 612 128.5Q602.5 129.5 602.5 123.5Z" fill="#fff"/>
<g stroke="#d9a0a8" stroke-width="0.8" fill="none"><circle cx="620.3" cy="124.4" r="2.4"/><path d="M617 124.4H623.6M620.3 121.1V127.7"/></g>
</svg>

<!-- COMP BOTTOM BAR -->
<div class="a" style="left:362px;top:320.5px;width:39.5px;height:12px;background:#171717"></div>
<div class="t" style="left:366px;top:322.5px;font-size:6.4px;color:#b0b0b0">100 %</div>
<svg class="a" style="left:394px;top:324.5px" width="6" height="4" viewBox="0 0 6 4"><path d="M1 1L3 3L5 1" fill="none" stroke="#999" stroke-width="0.8"/></svg>
<div class="a" style="left:405.5px;top:320.5px;width:48px;height:12px;background:#171717"></div>
<div class="t" style="width:25.5px;overflow:hidden;left:409px;top:322.5px;font-size:6.4px;color:#b0b0b0">(フル画質)</div>
<svg class="a" style="left:446px;top:324.5px" width="6" height="4" viewBox="0 0 6 4"><path d="M1 1L3 3L5 1" fill="none" stroke="#999" stroke-width="0.8"/></svg>
<svg class="a" style="left:458px;top:320px" width="200" height="12" viewBox="458 320 200 12"><g fill="none" stroke="#c8c8c8" stroke-width="0.9">
<rect x="462" y="322.5" width="8" height="7"/><path d="M465 324.5L468 326L465 327.5Z" fill="#c8c8c8"/>
<rect x="474.5" y="322.5" width="8" height="7"/><path d="M476 324H481M476 326H481M476 328H481" stroke-width="0.6"/>
<path d="M487 329.5L488 323H494V329.5M487 326H494" />
<rect x="499.5" y="322.5" width="8.5" height="7"/><rect x="501.5" y="324.5" width="4.5" height="3" fill="#c8c8c8"/>
<rect x="512" y="322" width="8" height="5.5"/><path d="M516 327.5V330M514 330H518"/>
</g>
<circle cx="531" cy="325.5" r="2" fill="#e04040"/><circle cx="533.3" cy="325.5" r="2" fill="#40c040" opacity="0.85"/><circle cx="532.2" cy="327.6" r="2" fill="#4060e0" opacity="0.85"/>
<path d="M545.5 321.8L549.3 324.2L548.6 328.6L542.4 328.6L541.7 324.2Z" fill="#d0d0d0"/><circle cx="545.5" cy="326" r="1.3" fill="#1e1e1e"/>
<rect x="578.5" y="323" width="9" height="6.5" rx="1" fill="#c8c8c8"/><circle cx="583" cy="326.3" r="1.8" fill="#1e1e1e"/><rect x="580.5" y="322" width="3" height="1.5" fill="#c8c8c8"/>
<path d="M592 329L598 323" stroke="#555" stroke-width="0.9"/><path d="M595 323H598V326" stroke="#555" stroke-width="0.9" fill="none"/>
</svg>
<div class="t" style="left:553px;top:322.5px;font-size:6.4px;color:#3f85dd">+0.0</div>
<div class="a" style="left:573px;top:321px;width:0.8px;height:11px;background:#333"></div>
<div class="a" style="left:608.5px;top:320.5px;width:33px;height:12px;background:#1a1a1a"></div>
<div class="t" style="left:612px;top:322.5px;font-size:6.2px;color:#8a8a8a">0;00;03;20</div>
<!-- RIGHT PANELS -->
<div class="a" style="left:952px;top:39px;width:115px;height:79px;background:#222222"></div>
<div class="t" style="width:11.5px;overflow:hidden;left:960px;top:43px;font-size:6.8px;color:#d0d0d0">情報</div>
<div class="a" style="left:978.5px;top:44.5px;width:5px;height:4.5px;border-top:0.8px solid #6a6a6a;border-bottom:0.8px solid #6a6a6a"></div>
<div class="a" style="left:978.5px;top:46.4px;width:5px;height:0.8px;background:#6a6a6a"></div>
<div class="a" style="left:957px;top:52.5px;width:26.5px;height:1.2px;background:#d0d0d0"></div>
<div class="t" style="width:26.5px;overflow:hidden;left:996px;top:43px;font-size:6.8px;color:#8a8a8a">プレビュー</div>
<div class="a" style="left:1044px;top:44px;width:0.7px;height:5px;background:#666"></div>
<div class="t" style="left:1057px;top:41px;font-size:10px;color:#ddd;line-height:10px">»</div>
<div class="a" style="left:957px;top:64px;width:10px;height:10px;background:#00b3b3"></div>
<div class="t" style="left:970px;top:55.5px;font-size:6px;color:#8a8a8a;line-height:7.6px">R :&nbsp; 0<br>G :&nbsp; 179<br>B :&nbsp; 179<br>A :&nbsp; 255</div>
<div class="a" style="left:1010px;top:56px;width:0.6px;height:32px;background:#303030"></div>
<div class="t" style="left:1021px;top:56.5px;font-size:6px;color:#8a8a8a;line-height:7.3px">X : 110<br>Y : 591</div>
<svg class="a" style="left:1013px;top:68px" width="7" height="7" viewBox="0 0 7 7"><path d="M3.5 0.5V6.5M0.5 3.5H6.5" stroke="#bbb" stroke-width="0.8"/></svg>
<div class="a" style="left:957px;top:89.5px;width:106px;height:0.6px;background:#303030"></div>
<div class="t" style="width:79.5px;overflow:hidden;left:957px;top:92px;font-size:6.2px;color:#9a9a9a;line-height:8px">キーフレームの位置 : 0;00;03;20<br>時間補間法 : ベジェ, リニア</div>

<div class="a" style="left:952px;top:120px;width:115px;height:214px;background:#222222"></div>
<div class="t" style="width:30.5px;overflow:hidden;left:959px;top:123.5px;font-size:6.4px;color:#c8c8c8">プロパティ :</div><div class="t" style="left:990px;top:123.5px;font-size:6.8px;color:#c8c8c8;transform-origin:0 0;transform:scaleX(0.86)">saddleアウトライン</div>
<div class="a" style="left:1039px;top:125px;width:5px;height:4.5px;border-top:0.8px solid #6a6a6a;border-bottom:0.8px solid #6a6a6a"></div>
<div class="a" style="left:1039px;top:126.9px;width:5px;height:0.8px;background:#6a6a6a"></div>
<div class="a" style="left:958px;top:133.5px;width:87px;height:1.2px;background:#d0d0d0"></div>
<div class="t" style="left:1057px;top:121.5px;font-size:10px;color:#ddd;line-height:10px">»</div>
<div class="t" style="width:52.5px;overflow:hidden;left:959px;top:137.5px;font-size:6.6px;color:#c0c0c0">レイヤートランスフ...</div>
<div class="t" style="width:21.5px;overflow:hidden;left:1010px;top:137.5px;font-size:6.6px;color:#3f85dd">リセット</div>
<svg class="a" style="left:964.5px;top:148.5px" width="7" height="7" viewBox="0 0 7 7"><circle cx="3.5" cy="4" r="2.4" fill="none" stroke="#bbb" stroke-width="0.9"/><path d="M3.5 0.3V1.4" stroke="#bbb" stroke-width="0.9"/></svg>
<div class="t" style="width:21.5px;overflow:hidden;left:985px;top:148.0px;font-size:6.6px;color:#a8a8a8">アンカー</div>
<div class="t" style="left:1009px;top:148.0px;font-size:6.4px;color:#3a78d0;text-decoration:underline dotted #3a78d0;text-underline-offset:1px">33.5</div>
<div class="t" style="left:1030px;top:148.0px;font-size:6.4px;color:#3a78d0;text-decoration:underline dotted #3a78d0;text-underline-offset:1px">11.4</div>
<svg class="a" style="left:964.5px;top:159.3px" width="7" height="7" viewBox="0 0 7 7"><circle cx="3.5" cy="4" r="2.4" fill="none" stroke="#bbb" stroke-width="0.9"/><path d="M3.5 0.3V1.4" stroke="#bbb" stroke-width="0.9"/></svg>
<div class="t" style="width:11.5px;overflow:hidden;left:985px;top:158.8px;font-size:6.6px;color:#a8a8a8">位置</div>
<div class="t" style="left:1009px;top:158.8px;font-size:6.4px;color:#3a78d0;text-decoration:underline dotted #3a78d0;text-underline-offset:1px">572</div>
<div class="t" style="left:1030px;top:158.8px;font-size:6.4px;color:#3a78d0;text-decoration:underline dotted #3a78d0;text-underline-offset:1px">267.5</div>
<svg class="a" style="left:960px;top:170.6px" width="16" height="6" viewBox="0 0 16 6"><path d="M2.5 0.8V5.2L0 3Z" fill="#ddd"/><path d="M8 0.5L10.5 3L8 5.5L5.5 3Z" fill="#3b82e0"/><path d="M13 1.5L14.5 3L13 4.5" fill="none" stroke="#666" stroke-width="0.7"/></svg>
<div class="t" style="width:21.5px;overflow:hidden;left:985px;top:169.6px;font-size:6.6px;color:#a8a8a8">スケール</div>
<div class="t" style="left:1009px;top:169.6px;font-size:6.4px;color:#3a78d0;text-decoration:underline dotted #3a78d0;text-underline-offset:1px">100%</div>
<div class="t" style="left:1030px;top:169.6px;font-size:6.4px;color:#3a78d0;text-decoration:underline dotted #3a78d0;text-underline-offset:1px">100%</div>
<svg class="a" style="left:964.5px;top:180.9px" width="7" height="7" viewBox="0 0 7 7"><circle cx="3.5" cy="4" r="2.4" fill="none" stroke="#bbb" stroke-width="0.9"/><path d="M3.5 0.3V1.4" stroke="#bbb" stroke-width="0.9"/></svg>
<div class="t" style="width:11.5px;overflow:hidden;left:985px;top:180.4px;font-size:6.6px;color:#a8a8a8">回転</div>
<div class="t" style="left:1009px;top:180.4px;font-size:6.4px;color:#3a78d0;text-decoration:underline dotted #3a78d0;text-underline-offset:1px">0x+0°</div>
<svg class="a" style="left:964.5px;top:191.7px" width="7" height="7" viewBox="0 0 7 7"><circle cx="3.5" cy="4" r="2.4" fill="none" stroke="#bbb" stroke-width="0.9"/><path d="M3.5 0.3V1.4" stroke="#bbb" stroke-width="0.9"/></svg>
<div class="t" style="width:21.5px;overflow:hidden;left:985px;top:191.2px;font-size:6.6px;color:#a8a8a8">不透明度</div>
<div class="t" style="left:1009px;top:191.2px;font-size:6.4px;color:#3a78d0;text-decoration:underline dotted #3a78d0;text-underline-offset:1px">100%</div>
<div class="a" style="left:958px;top:205px;width:104px;height:0.6px;background:#303030"></div>
<div class="t" style="width:36.5px;overflow:hidden;left:959px;top:209.5px;font-size:6.6px;color:#c8c8c8">レイヤーの内容</div>
<div class="a" style="left:959px;top:222px;width:101px;height:82px;background:#1b1b1b"></div>
<div class="a" style="left:971px;top:223.5px;width:89px;height:10.5px;background:#a8a8a8;border:0.7px solid #c4c4c4"></div>
<svg class="a" style="left:961.5px;top:226.5px" width="8" height="5" viewBox="0 0 8 5"><path d="M0.3 2.5Q4 -1 7.7 2.5Q4 6 0.3 2.5Z" fill="#ccc"/><circle cx="4" cy="2.5" r="1.1" fill="#212121"/></svg>
<svg class="a" style="left:975px;top:226.0px" width="6" height="6" viewBox="0 0 6 6"><path d="M3 0.2L3.75 2.1L5.8 2.2L4.2 3.5L4.75 5.6L3 4.45L1.25 5.6L1.8 3.5L0.2 2.2L2.25 2.1Z" fill="#333"/></svg>
<div class="t" style="width:53.5px;overflow:hidden;left:984px;top:225.0px;font-size:6.6px;color:#333">saddleアウトライン</div>
<svg class="a" style="left:961.5px;top:237.4px" width="8" height="5" viewBox="0 0 8 5"><path d="M0.3 2.5Q4 -1 7.7 2.5Q4 6 0.3 2.5Z" fill="#ccc"/><circle cx="4" cy="2.5" r="1.1" fill="#212121"/></svg>
<svg class="a" style="left:988px;top:236.9px" width="6" height="6" viewBox="0 0 6 6"><path d="M3 0.2L3.75 2.1L5.8 2.2L4.2 3.5L4.75 5.6L3 4.45L1.25 5.6L1.8 3.5L0.2 2.2L2.25 2.1Z" fill="#c8c8c8"/></svg>
<div class="t" style="width:27.5px;overflow:hidden;left:997px;top:235.9px;font-size:6.6px;color:#c8c8c8">グループ 1</div>
<svg class="a" style="left:961.5px;top:248.3px" width="8" height="5" viewBox="0 0 8 5"><path d="M0.3 2.5Q4 -1 7.7 2.5Q4 6 0.3 2.5Z" fill="#ccc"/><circle cx="4" cy="2.5" r="1.1" fill="#212121"/></svg>
<svg class="a" style="left:1001px;top:247.8px" width="6" height="6" viewBox="0 0 6 6"><path d="M3 0.2L3.75 2.1L5.8 2.2L4.2 3.5L4.75 5.6L3 4.45L1.25 5.6L1.8 3.5L0.2 2.2L2.25 2.1Z" fill="#c8c8c8"/></svg>
<div class="t" style="width:27.5px;overflow:hidden;left:1010px;top:246.8px;font-size:6.6px;color:#c8c8c8">グループ 1</div>

<!-- TIMELINE -->
<div class="a" style="left:0;top:333.3px;width:1067px;height:266.7px;background:#2a3a4c"></div>
<div class="a" style="left:0;top:333.3px;width:1067px;height:1.5px;background:#0c1727"></div>
<div class="a" style="left:1.8px;top:336.3px;width:1061.7px;height:260.9px;background:#222222"></div>
<div class="a" style="left:1063.5px;top:336.3px;width:1.3px;height:260.9px;background:#151a20"></div>
<!-- tabs -->
<div class="a" style="left:16.5px;top:340.5px;width:5px;height:5.5px;background:#c9b68f"></div>
<div class="t" style="left:26px;top:339.5px;font-size:6.6px;color:#7a7a7a">08 Globe</div>
<div class="a" style="left:81px;top:340.5px;width:5px;height:5.5px;background:#c9b68f"></div>
<div class="t" style="left:92px;top:339.5px;font-size:6.6px;color:#7a7a7a">EarthMap</div>
<svg class="a" style="left:141.5px;top:341.5px" width="4" height="4" viewBox="0 0 4 4"><path d="M0.5 0.5L3.5 3.5M3.5 0.5L0.5 3.5" stroke="#888" stroke-width="0.7"/></svg>
<div class="a" style="left:152px;top:340.5px;width:5px;height:5.5px;background:#c9b68f"></div>
<div class="t" style="left:162px;top:339.5px;font-size:6.4px;color:#c8c8c8">09 Bike</div>
<div class="a" style="left:189px;top:341px;width:5px;height:4.5px;border-top:0.8px solid #6a6a6a;border-bottom:0.8px solid #6a6a6a"></div>
<div class="a" style="left:189px;top:342.9px;width:5px;height:0.8px;background:#6a6a6a"></div>
<div class="a" style="left:142px;top:348.8px;width:51px;height:1.2px;background:#d0d0d0"></div>
<!-- timecode -->
<div class="t" style="left:10.5px;top:351.5px;font-size:8.6px;color:#4a8ee2;line-height:10px;font-weight:bold;letter-spacing:-0.1px">0;00;03;20</div>
<div class="t" style="left:11px;top:362px;font-size:5.3px;color:#2a5a96">00110 (29.97 fps)</div>
<div class="a" style="left:66px;top:356px;width:163px;height:9.5px;background:#161616"></div>
<svg class="a" style="left:68.5px;top:357px" width="10" height="8" viewBox="0 0 10 8"><circle cx="3.5" cy="3" r="2" fill="none" stroke="#ccc" stroke-width="1"/><path d="M1 7Q3.5 4.5 6 7" fill="none" stroke="#ccc" stroke-width="1"/><path d="M7 5.5L8 6.5L9 5.5" fill="#ccc"/></svg>
<svg class="a" style="left:238px;top:355px" width="80" height="12" viewBox="238 355 80 12"><g fill="none" stroke="#c8c8c8" stroke-width="0.9">
<path d="M240 358H244L247 363H249M244 358L246 360" /><path d="M247.5 361.5L249 363L247.5 364.5" />
<path d="M257 364V361Q260.5 356 264 361V364ZM256 364H265" fill="#c8c8c8"/>
<rect x="272" y="358.5" width="7" height="6" fill="#c8c8c8"/><rect x="274" y="357" width="6" height="5" fill="#c8c8c8" stroke="#212121"/>
<path d="M287 364L293 358" stroke-width="2.4"/><path d="M287 364L293 358" stroke="#212121" stroke-width="0.8"/>
<rect x="306" y="357.5" width="8" height="7.5"/><path d="M307 358.5L313 364"/>
</g></svg>
<div class="a" style="left:322px;top:351px;width:0.8px;height:18px;background:#333"></div>
<!-- header row -->
<svg class="a" style="left:3px;top:372px" width="320" height="9" viewBox="3 372 320 9"><g fill="#c0c0c0">
<path d="M4 376.5Q7.5 372.5 11 376.5Q7.5 380.5 4 376.5Z"/><circle cx="7.5" cy="376.5" r="1" fill="#212121"/>
<g transform="translate(1.5 0)"><path d="M12.5 375.5H14L16 373.5V379.5L14 377.5H12.5Z"/><path d="M17 374.5Q18.5 376.5 17 378.5" fill="none" stroke="#c0c0c0" stroke-width="0.6"/>
<circle cx="21.5" cy="376.5" r="2"/>
<rect x="26" y="375.8" width="5" height="3.8"/><path d="M27 375.8V374.5Q28.5 372.5 30 374.5V375.8" fill="none" stroke="#c0c0c0" stroke-width="0.8"/>
<path d="M44 373.5V376L48 380L51 377L47 373H44.5Z"/><circle cx="45.5" cy="374.8" r="0.6" fill="#212121"/></g>
<path d="M60.5 374.5L61 379M62.5 374.5L62 379M60 375.8H63.3M59.8 377.6H63" fill="none" stroke="#888" stroke-width="0.6"/>
<path d="M174.5 378.5V376.5Q177.5 372 180.5 376.5V378.5ZM174 378.5H181"/>
<path d="M186.5 373.5L189 376.5L186.5 379.5L184 376.5Z" opacity="0.7"/>
<path d="M192 373L198 379.5" stroke="#c0c0c0" stroke-width="0.9"/>
<text x="200" y="379.5" font-size="6.5" font-style="italic" font-family="Liberation Serif">fx</text>
<rect x="208" y="373.5" width="6" height="5.5"/><path d="M209.5 373.5V379M211 373.5V379M212.5 373.5V379" stroke="#212121" stroke-width="0.5"/>
<circle cx="219" cy="376.5" r="2.8" fill="none" stroke="#c0c0c0" stroke-width="0.9"/><path d="M217.5 378L220.5 375" stroke="#c0c0c0" stroke-width="0.9"/>
<circle cx="228" cy="376.5" r="2.8"/><path d="M228 373.7A2.8 2.8 0 0 0 228 379.3Z" fill="#212121"/>
<circle cx="236" cy="376.5" r="2.6" fill="none" stroke="#c0c0c0" stroke-width="0.8"/><circle cx="236" cy="376.5" r="0.9"/>
</g></svg>
<div class="t" style="width:26.5px;overflow:hidden;left:77px;top:372.5px;font-size:6.8px;color:#b0b0b0">レイヤー名</div>
<div class="t" style="width:26.5px;overflow:hidden;left:253px;top:372.5px;font-size:6.8px;color:#b0b0b0">親とリンク</div>

<div class="a" style="left:1.8px;top:381.80px;width:320.5px;height:207.70px;background:#2c2c2c"></div>
<div class="a" style="left:322.3px;top:381.80px;width:734px;height:207.70px;background:#3e3e3e"></div>
<div class="a" style="left:1053px;top:402.90px;width:3.3px;height:186.60px;background:#262626"></div>
<div class="a" style="left:1.8px;top:381.80px;width:320.5px;height:10.55px;background:#494949"></div>
<div class="a" style="left:322.3px;top:381.80px;width:734px;height:10.55px;background:#575757"></div>
<div class="a" style="left:1.8px;top:391.75px;width:1054.5px;height:0.9px;background:#2f2f2f"></div>
<svg class="a" style="left:3.5px;top:384.57px" width="8" height="5" viewBox="0 0 8 5"><path d="M0.3 2.5Q4 -1 7.7 2.5Q4 6 0.3 2.5Z" fill="#d0d0d0"/><circle cx="4" cy="2.5" r="1.1" fill="#2a2a2a"/></svg>
<div class="a" style="left:15px;top:382.80px;width:27px;height:8.55px;background:#444"></div>
<div class="a" style="left:41.5px;top:386.68px;width:3px;height:0.8px;background:#999"></div>
<div class="a" style="left:48px;top:383.10px;width:8.2px;height:7.95px;background:#bcbce6"></div>
<div class="t" style="left:60px;top:383.68px;font-size:6.4px;color:#8e8e8e">1</div>
<svg class="a" style="left:77.5px;top:384.07px" width="6" height="6" viewBox="0 0 6 6"><path d="M3 0.2L3.75 2.1L5.8 2.2L4.2 3.5L4.75 5.6L3 4.45L1.25 5.6L1.8 3.5L0.2 2.2L2.25 2.1Z" fill="#d0d0d0"/></svg>
<div class="a" style="left:85.7px;top:383.00px;width:87.7px;height:8.15px;border:0.9px solid #a8a8a8"></div>
<div class="t" style="width:53.5px;overflow:hidden;left:89px;top:383.68px;font-size:6.8px;color:#b0b0b0">saddleアウトライン</div>
<svg class="a" style="left:174px;top:383.07px" width="30" height="8" viewBox="0 0 30 8"><path d="M0.5 6.5V4.5Q3.5 0 6.5 4.5V6.5ZM0 6.5H7" fill="#c8c8c8"/><path d="M12.5 1.5L15 4L12.5 6.5L10 4Z" fill="#777"/><path d="M18.5 7L24.5 1" stroke="#d0d0d0" stroke-width="0.9"/></svg>
<div class="a" style="left:217.5px;top:382.80px;width:26px;height:8.55px;background:#444"></div>
<div class="a" style="left:245px;top:382.60px;width:18px;height:8.95px;background:#555"></div>
<svg class="a" style="left:253px;top:383.57px" width="8" height="7" viewBox="0 0 8 7"><path d="M4 6.5Q0.5 6.5 0.5 3.5Q0.5 0.5 4 0.5Q7 0.5 7 3Q7 5 4.5 5Q2.5 5 2.5 3.5Q2.5 2.3 4 2.3" fill="none" stroke="#8a8a8a" stroke-width="0.9"/></svg>
<div class="a" style="left:264.5px;top:382.80px;width:48px;height:8.55px;background:#363636"></div>
<div class="t" style="left:266.5px;top:383.68px;font-size:6.8px;color:#c8c8c8;width:40px;overflow:hidden">なし</div>
<svg class="a" style="left:305.5px;top:385.07px" width="6" height="4" viewBox="0 0 6 4"><path d="M1 1L3 3L5 1" fill="none" stroke="#999" stroke-width="0.8"/></svg>
<div class="a" style="left:650px;top:381.10px;width:406.0px;height:10.95px;background:#a3a1ca;border-top:0.9px solid #23282a;border-bottom:0.9px solid #23282a"></div>
<div class="a" style="left:1.8px;top:392.35px;width:1054.5px;height:10.55px;background:#2c2c2c"></div>
<svg class="a" style="left:3px;top:394.62px" width="20" height="6" viewBox="0 0 20 6"><path d="M5 0.8V5.2L2 3Z" fill="#ddd"/><path d="M10.5 0.5L13 3L10.5 5.5L8 3Z" fill="#3b82e0"/><path d="M16 1.5L17.5 3L16 4.5" fill="none" stroke="#666" stroke-width="0.7"/></svg>
<svg class="a" style="left:71px;top:393.62px" width="8" height="8" viewBox="0 0 8 8"><circle cx="4" cy="4.3" r="2.8" fill="none" stroke="#3b82e0" stroke-width="1"/><path d="M4 0.5V1.5" stroke="#3b82e0" stroke-width="1"/></svg>
<div class="t" style="left:80.5px;top:393.62px;font-size:6.5px;color:#c8c8c8">Ŀ</div>
<div class="a" style="left:90px;top:393.15px;width:83px;height:8.95px;background:#3a3a3a"></div>
<div class="t" style="width:21.5px;overflow:hidden;left:94px;top:394.23px;font-size:6.8px;color:#a8a8a8">スケール</div>
<svg class="a" style="left:176px;top:395.12px" width="8" height="5" viewBox="0 0 8 5"><rect x="0.5" y="0.5" width="7" height="4" rx="2" fill="none" stroke="#bbb" stroke-width="0.9"/><path d="M2 2.5H6" stroke="#bbb" stroke-width="0.9"/></svg>
<div class="t" style="left:186px;top:394.02px;font-size:6px;color:#3f86e0;font-weight:bold;letter-spacing:-0.3px">100.0,100.0%</div>
<svg class="a" style="left:253.5px;top:394.12px" width="7" height="7" viewBox="0 0 7 7"><circle cx="3.5" cy="3.5" r="2.8" fill="none" stroke="#666" stroke-width="0.9"/><circle cx="3.5" cy="3.5" r="1.2" fill="none" stroke="#666" stroke-width="0.7"/></svg>
<div class="a" style="left:1.8px;top:412.85px;width:1054.5px;height:0.9px;background:#2f2f2f"></div>
<svg class="a" style="left:3.5px;top:405.68px" width="8" height="5" viewBox="0 0 8 5"><path d="M0.3 2.5Q4 -1 7.7 2.5Q4 6 0.3 2.5Z" fill="#d0d0d0"/><circle cx="4" cy="2.5" r="1.1" fill="#2a2a2a"/></svg>
<div class="a" style="left:15px;top:403.90px;width:27px;height:8.55px;background:#262626"></div>
<svg class="a" style="left:42px;top:405.68px" width="4" height="5" viewBox="0 0 4 5"><path d="M1 0.8L3 2.5L1 4.2" fill="none" stroke="#777" stroke-width="0.7"/></svg>
<div class="a" style="left:48px;top:404.20px;width:8.2px;height:7.95px;background:#bcbce6"></div>
<div class="t" style="left:60px;top:404.78px;font-size:6.4px;color:#8e8e8e">2</div>
<svg class="a" style="left:77.5px;top:405.18px" width="6" height="6" viewBox="0 0 6 6"><path d="M3 0.2L3.75 2.1L5.8 2.2L4.2 3.5L4.75 5.6L3 4.45L1.25 5.6L1.8 3.5L0.2 2.2L2.25 2.1Z" fill="#d0d0d0"/></svg>
<div class="t" style="width:52.1px;overflow:hidden;left:88px;top:404.78px;font-size:6.8px;color:#c4c4c4;letter-spacing:-0.12px">handleアウトライン</div>
<svg class="a" style="left:174px;top:404.18px" width="30" height="8" viewBox="0 0 30 8"><path d="M0.5 6.5V4.5Q3.5 0 6.5 4.5V6.5ZM0 6.5H7" fill="#c8c8c8"/><path d="M12.5 1.5L15 4L12.5 6.5L10 4Z" fill="#777"/><path d="M18.5 7L24.5 1" stroke="#d0d0d0" stroke-width="0.9"/></svg>
<div class="a" style="left:217.5px;top:403.90px;width:26px;height:8.55px;background:#262626"></div>
<svg class="a" style="left:253px;top:404.68px" width="8" height="7" viewBox="0 0 8 7"><path d="M4 6.5Q0.5 6.5 0.5 3.5Q0.5 0.5 4 0.5Q7 0.5 7 3Q7 5 4.5 5Q2.5 5 2.5 3.5Q2.5 2.3 4 2.3" fill="none" stroke="#8a8a8a" stroke-width="0.9"/></svg>
<div class="a" style="left:264.5px;top:403.90px;width:48px;height:8.55px;background:#232323"></div>
<div class="t" style="left:266.5px;top:404.78px;font-size:6.8px;color:#c8c8c8;width:40px;overflow:hidden">なし</div>
<svg class="a" style="left:305.5px;top:406.18px" width="6" height="4" viewBox="0 0 6 4"><path d="M1 1L3 3L5 1" fill="none" stroke="#999" stroke-width="0.8"/></svg>
<div class="a" style="left:650px;top:402.20px;width:402.5px;height:10.95px;background:#8b89a4;border-top:0.9px solid #23282a;border-bottom:0.9px solid #23282a"></div>
<div class="a" style="left:1.8px;top:423.40px;width:1054.5px;height:0.9px;background:#2f2f2f"></div>
<svg class="a" style="left:3.5px;top:416.22px" width="8" height="5" viewBox="0 0 8 5"><path d="M0.3 2.5Q4 -1 7.7 2.5Q4 6 0.3 2.5Z" fill="#d0d0d0"/><circle cx="4" cy="2.5" r="1.1" fill="#2a2a2a"/></svg>
<div class="a" style="left:15px;top:414.45px;width:27px;height:8.55px;background:#262626"></div>
<svg class="a" style="left:42px;top:416.22px" width="4" height="5" viewBox="0 0 4 5"><path d="M1 0.8L3 2.5L1 4.2" fill="none" stroke="#777" stroke-width="0.7"/></svg>
<div class="a" style="left:48px;top:414.75px;width:8.2px;height:7.95px;background:#bcbce6"></div>
<div class="t" style="left:60px;top:415.32px;font-size:6.4px;color:#8e8e8e">3</div>
<svg class="a" style="left:77.5px;top:415.72px" width="6" height="6" viewBox="0 0 6 6"><path d="M3 0.2L3.75 2.1L5.8 2.2L4.2 3.5L4.75 5.6L3 4.45L1.25 5.6L1.8 3.5L0.2 2.2L2.25 2.1Z" fill="#d0d0d0"/></svg>
<div class="t" style="width:44.3px;overflow:hidden;left:88px;top:415.32px;font-size:6.8px;color:#c4c4c4;letter-spacing:-0.12px">tubeアウトライン</div>
<svg class="a" style="left:174px;top:414.72px" width="30" height="8" viewBox="0 0 30 8"><path d="M0.5 6.5V4.5Q3.5 0 6.5 4.5V6.5ZM0 6.5H7" fill="#c8c8c8"/><path d="M12.5 1.5L15 4L12.5 6.5L10 4Z" fill="#777"/><path d="M18.5 7L24.5 1" stroke="#d0d0d0" stroke-width="0.9"/></svg>
<div class="a" style="left:217.5px;top:414.45px;width:26px;height:8.55px;background:#262626"></div>
<svg class="a" style="left:253px;top:415.22px" width="8" height="7" viewBox="0 0 8 7"><path d="M4 6.5Q0.5 6.5 0.5 3.5Q0.5 0.5 4 0.5Q7 0.5 7 3Q7 5 4.5 5Q2.5 5 2.5 3.5Q2.5 2.3 4 2.3" fill="none" stroke="#8a8a8a" stroke-width="0.9"/></svg>
<div class="a" style="left:264.5px;top:414.45px;width:48px;height:8.55px;background:#232323"></div>
<div class="t" style="left:266.5px;top:415.32px;font-size:6.8px;color:#c8c8c8;width:40px;overflow:hidden">なし</div>
<svg class="a" style="left:305.5px;top:416.72px" width="6" height="4" viewBox="0 0 6 4"><path d="M1 1L3 3L5 1" fill="none" stroke="#999" stroke-width="0.8"/></svg>
<div class="a" style="left:609px;top:412.75px;width:443.5px;height:10.95px;background:#8b89a4;border-top:0.9px solid #23282a;border-bottom:0.9px solid #23282a"></div>
<div class="a" style="left:1.8px;top:433.95px;width:1054.5px;height:0.9px;background:#2f2f2f"></div>
<svg class="a" style="left:3.5px;top:426.77px" width="8" height="5" viewBox="0 0 8 5"><path d="M0.3 2.5Q4 -1 7.7 2.5Q4 6 0.3 2.5Z" fill="#d0d0d0"/><circle cx="4" cy="2.5" r="1.1" fill="#2a2a2a"/></svg>
<div class="a" style="left:15px;top:425.00px;width:27px;height:8.55px;background:#262626"></div>
<svg class="a" style="left:42px;top:426.77px" width="4" height="5" viewBox="0 0 4 5"><path d="M1 0.8L3 2.5L1 4.2" fill="none" stroke="#777" stroke-width="0.7"/></svg>
<div class="a" style="left:48px;top:425.30px;width:8.2px;height:7.95px;background:#eebccb"></div>
<div class="t" style="left:60px;top:425.88px;font-size:6.4px;color:#8e8e8e">4</div>
<svg class="a" style="left:77.5px;top:426.27px" width="6" height="6" viewBox="0 0 6 6"><path d="M3 0.2L3.75 2.1L5.8 2.2L4.2 3.5L4.75 5.6L3 4.45L1.25 5.6L1.8 3.5L0.2 2.2L2.25 2.1Z" fill="#d0d0d0"/></svg>
<div class="t" style="width:63.6px;overflow:hidden;left:88px;top:425.88px;font-size:6.8px;color:#c4c4c4;letter-spacing:-0.12px">frame seatアウトライン</div>
<svg class="a" style="left:174px;top:425.27px" width="30" height="8" viewBox="0 0 30 8"><path d="M0.5 6.5V4.5Q3.5 0 6.5 4.5V6.5ZM0 6.5H7" fill="#c8c8c8"/><path d="M12.5 1.5L15 4L12.5 6.5L10 4Z" fill="#777"/><path d="M18.5 7L24.5 1" stroke="#d0d0d0" stroke-width="0.9"/></svg>
<div class="a" style="left:217.5px;top:425.00px;width:26px;height:8.55px;background:#262626"></div>
<svg class="a" style="left:253px;top:425.77px" width="8" height="7" viewBox="0 0 8 7"><path d="M4 6.5Q0.5 6.5 0.5 3.5Q0.5 0.5 4 0.5Q7 0.5 7 3Q7 5 4.5 5Q2.5 5 2.5 3.5Q2.5 2.3 4 2.3" fill="none" stroke="#8a8a8a" stroke-width="0.9"/></svg>
<div class="a" style="left:264.5px;top:425.00px;width:48px;height:8.55px;background:#232323"></div>
<div class="t" style="left:266.5px;top:425.88px;font-size:6.8px;color:#c8c8c8;width:40px;overflow:hidden">なし</div>
<svg class="a" style="left:305.5px;top:427.27px" width="6" height="4" viewBox="0 0 6 4"><path d="M1 1L3 3L5 1" fill="none" stroke="#999" stroke-width="0.8"/></svg>
<div class="a" style="left:569px;top:423.30px;width:487.0px;height:10.95px;background:#9c848c;border-top:0.9px solid #23282a;border-bottom:0.9px solid #23282a"></div>
<div class="a" style="left:1.8px;top:444.50px;width:1054.5px;height:0.9px;background:#2f2f2f"></div>
<svg class="a" style="left:3.5px;top:437.32px" width="8" height="5" viewBox="0 0 8 5"><path d="M0.3 2.5Q4 -1 7.7 2.5Q4 6 0.3 2.5Z" fill="#d0d0d0"/><circle cx="4" cy="2.5" r="1.1" fill="#2a2a2a"/></svg>
<div class="a" style="left:15px;top:435.55px;width:27px;height:8.55px;background:#262626"></div>
<svg class="a" style="left:42px;top:437.32px" width="4" height="5" viewBox="0 0 4 5"><path d="M1 0.8L3 2.5L1 4.2" fill="none" stroke="#777" stroke-width="0.7"/></svg>
<div class="a" style="left:48px;top:435.85px;width:8.2px;height:7.95px;background:#eebccb"></div>
<div class="t" style="left:60px;top:436.43px;font-size:6.4px;color:#8e8e8e">5</div>
<svg class="a" style="left:77.5px;top:436.82px" width="6" height="6" viewBox="0 0 6 6"><path d="M3 0.2L3.75 2.1L5.8 2.2L4.2 3.5L4.75 5.6L3 4.45L1.25 5.6L1.8 3.5L0.2 2.2L2.25 2.1Z" fill="#d0d0d0"/></svg>
<div class="t" style="width:73.2px;overflow:hidden;left:88px;top:436.43px;font-size:6.8px;color:#c4c4c4;letter-spacing:-0.12px">frame supportアウトライン</div>
<svg class="a" style="left:174px;top:435.82px" width="30" height="8" viewBox="0 0 30 8"><path d="M0.5 6.5V4.5Q3.5 0 6.5 4.5V6.5ZM0 6.5H7" fill="#c8c8c8"/><path d="M12.5 1.5L15 4L12.5 6.5L10 4Z" fill="#777"/><path d="M18.5 7L24.5 1" stroke="#d0d0d0" stroke-width="0.9"/></svg>
<div class="a" style="left:217.5px;top:435.55px;width:26px;height:8.55px;background:#262626"></div>
<svg class="a" style="left:253px;top:436.32px" width="8" height="7" viewBox="0 0 8 7"><path d="M4 6.5Q0.5 6.5 0.5 3.5Q0.5 0.5 4 0.5Q7 0.5 7 3Q7 5 4.5 5Q2.5 5 2.5 3.5Q2.5 2.3 4 2.3" fill="none" stroke="#8a8a8a" stroke-width="0.9"/></svg>
<div class="a" style="left:264.5px;top:435.55px;width:48px;height:8.55px;background:#232323"></div>
<div class="t" style="left:266.5px;top:436.43px;font-size:6.8px;color:#c8c8c8;width:40px;overflow:hidden">なし</div>
<svg class="a" style="left:305.5px;top:437.82px" width="6" height="4" viewBox="0 0 6 4"><path d="M1 1L3 3L5 1" fill="none" stroke="#999" stroke-width="0.8"/></svg>
<div class="a" style="left:569px;top:433.85px;width:487.0px;height:10.95px;background:#9c848c;border-top:0.9px solid #23282a;border-bottom:0.9px solid #23282a"></div>
<div class="a" style="left:1.8px;top:455.05px;width:1054.5px;height:0.9px;background:#2f2f2f"></div>
<svg class="a" style="left:3.5px;top:447.88px" width="8" height="5" viewBox="0 0 8 5"><path d="M0.3 2.5Q4 -1 7.7 2.5Q4 6 0.3 2.5Z" fill="#d0d0d0"/><circle cx="4" cy="2.5" r="1.1" fill="#2a2a2a"/></svg>
<div class="a" style="left:15px;top:446.10px;width:27px;height:8.55px;background:#262626"></div>
<svg class="a" style="left:42px;top:447.88px" width="4" height="5" viewBox="0 0 4 5"><path d="M1 0.8L3 2.5L1 4.2" fill="none" stroke="#777" stroke-width="0.7"/></svg>
<div class="a" style="left:48px;top:446.40px;width:8.2px;height:7.95px;background:#eebccb"></div>
<div class="t" style="left:60px;top:446.98px;font-size:6.4px;color:#8e8e8e">6</div>
<svg class="a" style="left:77.5px;top:447.38px" width="6" height="6" viewBox="0 0 6 6"><path d="M3 0.2L3.75 2.1L5.8 2.2L4.2 3.5L4.75 5.6L3 4.45L1.25 5.6L1.8 3.5L0.2 2.2L2.25 2.1Z" fill="#d0d0d0"/></svg>
<div class="t" style="width:65.6px;overflow:hidden;left:88px;top:446.98px;font-size:6.8px;color:#c4c4c4;letter-spacing:-0.12px">frame bodyアウトライン</div>
<svg class="a" style="left:174px;top:446.38px" width="30" height="8" viewBox="0 0 30 8"><path d="M0.5 6.5V4.5Q3.5 0 6.5 4.5V6.5ZM0 6.5H7" fill="#c8c8c8"/><path d="M12.5 1.5L15 4L12.5 6.5L10 4Z" fill="#777"/><path d="M18.5 7L24.5 1" stroke="#d0d0d0" stroke-width="0.9"/></svg>
<div class="a" style="left:217.5px;top:446.10px;width:26px;height:8.55px;background:#262626"></div>
<svg class="a" style="left:253px;top:446.88px" width="8" height="7" viewBox="0 0 8 7"><path d="M4 6.5Q0.5 6.5 0.5 3.5Q0.5 0.5 4 0.5Q7 0.5 7 3Q7 5 4.5 5Q2.5 5 2.5 3.5Q2.5 2.3 4 2.3" fill="none" stroke="#8a8a8a" stroke-width="0.9"/></svg>
<div class="a" style="left:264.5px;top:446.10px;width:48px;height:8.55px;background:#232323"></div>
<div class="t" style="left:266.5px;top:446.98px;font-size:6.8px;color:#c8c8c8;width:40px;overflow:hidden">なし</div>
<svg class="a" style="left:305.5px;top:448.38px" width="6" height="4" viewBox="0 0 6 4"><path d="M1 1L3 3L5 1" fill="none" stroke="#999" stroke-width="0.8"/></svg>
<div class="a" style="left:569px;top:444.40px;width:487.0px;height:10.95px;background:#9c848c;border-top:0.9px solid #23282a;border-bottom:0.9px solid #23282a"></div>
<div class="a" style="left:1.8px;top:465.60px;width:1054.5px;height:0.9px;background:#2f2f2f"></div>
<svg class="a" style="left:3.5px;top:458.43px" width="8" height="5" viewBox="0 0 8 5"><path d="M0.3 2.5Q4 -1 7.7 2.5Q4 6 0.3 2.5Z" fill="#d0d0d0"/><circle cx="4" cy="2.5" r="1.1" fill="#2a2a2a"/></svg>
<div class="a" style="left:15px;top:456.65px;width:27px;height:8.55px;background:#262626"></div>
<svg class="a" style="left:42px;top:458.43px" width="4" height="5" viewBox="0 0 4 5"><path d="M1 0.8L3 2.5L1 4.2" fill="none" stroke="#777" stroke-width="0.7"/></svg>
<div class="a" style="left:48px;top:456.95px;width:8.2px;height:7.95px;background:#eebccb"></div>
<div class="t" style="left:60px;top:457.53px;font-size:6.4px;color:#8e8e8e">7</div>
<svg class="a" style="left:77.5px;top:457.93px" width="6" height="6" viewBox="0 0 6 6"><path d="M3 0.2L3.75 2.1L5.8 2.2L4.2 3.5L4.75 5.6L3 4.45L1.25 5.6L1.8 3.5L0.2 2.2L2.25 2.1Z" fill="#d0d0d0"/></svg>
<div class="t" style="width:65.6px;overflow:hidden;left:88px;top:457.53px;font-size:6.8px;color:#c4c4c4;letter-spacing:-0.12px">frame headアウトライン</div>
<svg class="a" style="left:174px;top:456.93px" width="30" height="8" viewBox="0 0 30 8"><path d="M0.5 6.5V4.5Q3.5 0 6.5 4.5V6.5ZM0 6.5H7" fill="#c8c8c8"/><path d="M12.5 1.5L15 4L12.5 6.5L10 4Z" fill="#777"/><path d="M18.5 7L24.5 1" stroke="#d0d0d0" stroke-width="0.9"/></svg>
<div class="a" style="left:217.5px;top:456.65px;width:26px;height:8.55px;background:#262626"></div>
<svg class="a" style="left:253px;top:457.43px" width="8" height="7" viewBox="0 0 8 7"><path d="M4 6.5Q0.5 6.5 0.5 3.5Q0.5 0.5 4 0.5Q7 0.5 7 3Q7 5 4.5 5Q2.5 5 2.5 3.5Q2.5 2.3 4 2.3" fill="none" stroke="#8a8a8a" stroke-width="0.9"/></svg>
<div class="a" style="left:264.5px;top:456.65px;width:48px;height:8.55px;background:#232323"></div>
<div class="t" style="left:266.5px;top:457.53px;font-size:6.8px;color:#c8c8c8;width:40px;overflow:hidden">なし</div>
<svg class="a" style="left:305.5px;top:458.93px" width="6" height="4" viewBox="0 0 6 4"><path d="M1 1L3 3L5 1" fill="none" stroke="#999" stroke-width="0.8"/></svg>
<div class="a" style="left:569px;top:454.95px;width:487.0px;height:10.95px;background:#9c848c;border-top:0.9px solid #23282a;border-bottom:0.9px solid #23282a"></div>
<div class="a" style="left:1.8px;top:476.15px;width:1054.5px;height:0.9px;background:#2f2f2f"></div>
<svg class="a" style="left:3.5px;top:468.98px" width="8" height="5" viewBox="0 0 8 5"><path d="M0.3 2.5Q4 -1 7.7 2.5Q4 6 0.3 2.5Z" fill="#d0d0d0"/><circle cx="4" cy="2.5" r="1.1" fill="#2a2a2a"/></svg>
<div class="a" style="left:15px;top:467.20px;width:27px;height:8.55px;background:#262626"></div>
<svg class="a" style="left:42px;top:468.98px" width="4" height="5" viewBox="0 0 4 5"><path d="M1 0.8L3 2.5L1 4.2" fill="none" stroke="#777" stroke-width="0.7"/></svg>
<div class="a" style="left:48px;top:467.50px;width:8.2px;height:7.95px;background:#a8d8d4"></div>
<div class="t" style="left:60px;top:468.08px;font-size:6.4px;color:#8e8e8e">8</div>
<svg class="a" style="left:77.5px;top:468.48px" width="6" height="6" viewBox="0 0 6 6"><path d="M3 0.2L3.75 2.1L5.8 2.2L4.2 3.5L4.75 5.6L3 4.45L1.25 5.6L1.8 3.5L0.2 2.2L2.25 2.1Z" fill="#d0d0d0"/></svg>
<div class="t" style="width:67.3px;overflow:hidden;left:88px;top:468.08px;font-size:6.8px;color:#c4c4c4;letter-spacing:-0.12px">pedal foot bアウトライン</div>
<svg class="a" style="left:174px;top:467.48px" width="30" height="8" viewBox="0 0 30 8"><path d="M0.5 6.5V4.5Q3.5 0 6.5 4.5V6.5ZM0 6.5H7" fill="#c8c8c8"/><path d="M12.5 1.5L15 4L12.5 6.5L10 4Z" fill="#777"/><path d="M18.5 7L24.5 1" stroke="#d0d0d0" stroke-width="0.9"/></svg>
<div class="a" style="left:217.5px;top:467.20px;width:26px;height:8.55px;background:#262626"></div>
<svg class="a" style="left:253px;top:467.98px" width="8" height="7" viewBox="0 0 8 7"><path d="M4 6.5Q0.5 6.5 0.5 3.5Q0.5 0.5 4 0.5Q7 0.5 7 3Q7 5 4.5 5Q2.5 5 2.5 3.5Q2.5 2.3 4 2.3" fill="none" stroke="#8a8a8a" stroke-width="0.9"/></svg>
<div class="a" style="left:264.5px;top:467.20px;width:48px;height:8.55px;background:#232323"></div>
<div class="t" style="left:266.5px;top:468.08px;font-size:6.8px;color:#c8c8c8;width:40px;overflow:hidden">13. chain circ</div>
<svg class="a" style="left:305.5px;top:469.48px" width="6" height="4" viewBox="0 0 6 4"><path d="M1 1L3 3L5 1" fill="none" stroke="#999" stroke-width="0.8"/></svg>
<div class="a" style="left:690px;top:465.50px;width:362.5px;height:10.95px;background:#7d9597;border-top:0.9px solid #23282a;border-bottom:0.9px solid #23282a"></div>
<div class="a" style="left:1.8px;top:486.70px;width:1054.5px;height:0.9px;background:#2f2f2f"></div>
<svg class="a" style="left:3.5px;top:479.52px" width="8" height="5" viewBox="0 0 8 5"><path d="M0.3 2.5Q4 -1 7.7 2.5Q4 6 0.3 2.5Z" fill="#d0d0d0"/><circle cx="4" cy="2.5" r="1.1" fill="#2a2a2a"/></svg>
<div class="a" style="left:15px;top:477.75px;width:27px;height:8.55px;background:#262626"></div>
<svg class="a" style="left:42px;top:479.52px" width="4" height="5" viewBox="0 0 4 5"><path d="M1 0.8L3 2.5L1 4.2" fill="none" stroke="#777" stroke-width="0.7"/></svg>
<div class="a" style="left:48px;top:478.05px;width:8.2px;height:7.95px;background:#a8d8d4"></div>
<div class="t" style="left:60px;top:478.62px;font-size:6.4px;color:#8e8e8e">9</div>
<svg class="a" style="left:77.5px;top:479.02px" width="6" height="6" viewBox="0 0 6 6"><path d="M3 0.2L3.75 2.1L5.8 2.2L4.2 3.5L4.75 5.6L3 4.45L1.25 5.6L1.8 3.5L0.2 2.2L2.25 2.1Z" fill="#d0d0d0"/></svg>
<div class="t" style="width:65.3px;overflow:hidden;left:88px;top:478.62px;font-size:6.8px;color:#c4c4c4;letter-spacing:-0.12px">pedal foot fアウトライン</div>
<svg class="a" style="left:174px;top:478.02px" width="30" height="8" viewBox="0 0 30 8"><path d="M0.5 6.5V4.5Q3.5 0 6.5 4.5V6.5ZM0 6.5H7" fill="#c8c8c8"/><path d="M12.5 1.5L15 4L12.5 6.5L10 4Z" fill="#777"/><path d="M18.5 7L24.5 1" stroke="#d0d0d0" stroke-width="0.9"/></svg>
<div class="a" style="left:217.5px;top:477.75px;width:26px;height:8.55px;background:#262626"></div>
<svg class="a" style="left:253px;top:478.52px" width="8" height="7" viewBox="0 0 8 7"><path d="M4 6.5Q0.5 6.5 0.5 3.5Q0.5 0.5 4 0.5Q7 0.5 7 3Q7 5 4.5 5Q2.5 5 2.5 3.5Q2.5 2.3 4 2.3" fill="none" stroke="#8a8a8a" stroke-width="0.9"/></svg>
<div class="a" style="left:264.5px;top:477.75px;width:48px;height:8.55px;background:#232323"></div>
<div class="t" style="left:266.5px;top:478.62px;font-size:6.8px;color:#c8c8c8;width:40px;overflow:hidden">13. chain circ</div>
<svg class="a" style="left:305.5px;top:480.02px" width="6" height="4" viewBox="0 0 6 4"><path d="M1 1L3 3L5 1" fill="none" stroke="#999" stroke-width="0.8"/></svg>
<div class="a" style="left:690px;top:476.05px;width:362.5px;height:10.95px;background:#7d9597;border-top:0.9px solid #23282a;border-bottom:0.9px solid #23282a"></div>
<div class="a" style="left:1.8px;top:497.25px;width:1054.5px;height:0.9px;background:#2f2f2f"></div>
<svg class="a" style="left:3.5px;top:490.07px" width="8" height="5" viewBox="0 0 8 5"><path d="M0.3 2.5Q4 -1 7.7 2.5Q4 6 0.3 2.5Z" fill="#d0d0d0"/><circle cx="4" cy="2.5" r="1.1" fill="#2a2a2a"/></svg>
<div class="a" style="left:15px;top:488.30px;width:27px;height:8.55px;background:#262626"></div>
<svg class="a" style="left:42px;top:490.07px" width="4" height="5" viewBox="0 0 4 5"><path d="M1 0.8L3 2.5L1 4.2" fill="none" stroke="#777" stroke-width="0.7"/></svg>
<div class="a" style="left:48px;top:488.60px;width:8.2px;height:7.95px;background:#a8d8d4"></div>
<div class="t" style="left:60px;top:489.18px;font-size:6.4px;color:#8e8e8e">10</div>
<svg class="a" style="left:77.5px;top:489.57px" width="6" height="6" viewBox="0 0 6 6"><path d="M3 0.2L3.75 2.1L5.8 2.2L4.2 3.5L4.75 5.6L3 4.45L1.25 5.6L1.8 3.5L0.2 2.2L2.25 2.1Z" fill="#d0d0d0"/></svg>
<div class="t" style="width:67.5px;overflow:hidden;left:88px;top:489.18px;font-size:6.8px;color:#c4c4c4;letter-spacing:-0.12px">pedal arm bアウトライン</div>
<svg class="a" style="left:174px;top:488.57px" width="30" height="8" viewBox="0 0 30 8"><path d="M0.5 6.5V4.5Q3.5 0 6.5 4.5V6.5ZM0 6.5H7" fill="#c8c8c8"/><path d="M12.5 1.5L15 4L12.5 6.5L10 4Z" fill="#777"/><path d="M18.5 7L24.5 1" stroke="#d0d0d0" stroke-width="0.9"/></svg>
<div class="a" style="left:217.5px;top:488.30px;width:26px;height:8.55px;background:#262626"></div>
<svg class="a" style="left:253px;top:489.07px" width="8" height="7" viewBox="0 0 8 7"><path d="M4 6.5Q0.5 6.5 0.5 3.5Q0.5 0.5 4 0.5Q7 0.5 7 3Q7 5 4.5 5Q2.5 5 2.5 3.5Q2.5 2.3 4 2.3" fill="none" stroke="#8a8a8a" stroke-width="0.9"/></svg>
<div class="a" style="left:264.5px;top:488.30px;width:48px;height:8.55px;background:#232323"></div>
<div class="t" style="left:266.5px;top:489.18px;font-size:6.8px;color:#c8c8c8;width:40px;overflow:hidden">13. chain circ</div>
<svg class="a" style="left:305.5px;top:490.57px" width="6" height="4" viewBox="0 0 6 4"><path d="M1 1L3 3L5 1" fill="none" stroke="#999" stroke-width="0.8"/></svg>
<div class="a" style="left:609px;top:486.60px;width:443.5px;height:10.95px;background:#7d9597;border-top:0.9px solid #23282a;border-bottom:0.9px solid #23282a"></div>
<div class="a" style="left:1.8px;top:507.80px;width:1054.5px;height:0.9px;background:#2f2f2f"></div>
<svg class="a" style="left:3.5px;top:500.62px" width="8" height="5" viewBox="0 0 8 5"><path d="M0.3 2.5Q4 -1 7.7 2.5Q4 6 0.3 2.5Z" fill="#d0d0d0"/><circle cx="4" cy="2.5" r="1.1" fill="#2a2a2a"/></svg>
<div class="a" style="left:15px;top:498.85px;width:27px;height:8.55px;background:#262626"></div>
<svg class="a" style="left:42px;top:500.62px" width="4" height="5" viewBox="0 0 4 5"><path d="M1 0.8L3 2.5L1 4.2" fill="none" stroke="#777" stroke-width="0.7"/></svg>
<div class="a" style="left:48px;top:499.15px;width:8.2px;height:7.95px;background:#a8d8d4"></div>
<div class="t" style="left:60px;top:499.73px;font-size:6.4px;color:#8e8e8e">11</div>
<svg class="a" style="left:77.5px;top:500.12px" width="6" height="6" viewBox="0 0 6 6"><path d="M3 0.2L3.75 2.1L5.8 2.2L4.2 3.5L4.75 5.6L3 4.45L1.25 5.6L1.8 3.5L0.2 2.2L2.25 2.1Z" fill="#d0d0d0"/></svg>
<div class="t" style="width:65.5px;overflow:hidden;left:88px;top:499.73px;font-size:6.8px;color:#c4c4c4;letter-spacing:-0.12px">pedal arm fアウトライン</div>
<svg class="a" style="left:174px;top:499.12px" width="30" height="8" viewBox="0 0 30 8"><path d="M0.5 6.5V4.5Q3.5 0 6.5 4.5V6.5ZM0 6.5H7" fill="#c8c8c8"/><path d="M12.5 1.5L15 4L12.5 6.5L10 4Z" fill="#777"/><path d="M18.5 7L24.5 1" stroke="#d0d0d0" stroke-width="0.9"/></svg>
<div class="a" style="left:217.5px;top:498.85px;width:26px;height:8.55px;background:#262626"></div>
<svg class="a" style="left:253px;top:499.62px" width="8" height="7" viewBox="0 0 8 7"><path d="M4 6.5Q0.5 6.5 0.5 3.5Q0.5 0.5 4 0.5Q7 0.5 7 3Q7 5 4.5 5Q2.5 5 2.5 3.5Q2.5 2.3 4 2.3" fill="none" stroke="#8a8a8a" stroke-width="0.9"/></svg>
<div class="a" style="left:264.5px;top:498.85px;width:48px;height:8.55px;background:#232323"></div>
<div class="t" style="left:266.5px;top:499.73px;font-size:6.8px;color:#c8c8c8;width:40px;overflow:hidden">13. chain circ</div>
<svg class="a" style="left:305.5px;top:501.12px" width="6" height="4" viewBox="0 0 6 4"><path d="M1 1L3 3L5 1" fill="none" stroke="#999" stroke-width="0.8"/></svg>
<div class="a" style="left:609px;top:497.15px;width:443.5px;height:10.95px;background:#7d9597;border-top:0.9px solid #23282a;border-bottom:0.9px solid #23282a"></div>
<div class="a" style="left:1.8px;top:518.35px;width:1054.5px;height:0.9px;background:#2f2f2f"></div>
<svg class="a" style="left:3.5px;top:511.18px" width="8" height="5" viewBox="0 0 8 5"><path d="M0.3 2.5Q4 -1 7.7 2.5Q4 6 0.3 2.5Z" fill="#d0d0d0"/><circle cx="4" cy="2.5" r="1.1" fill="#2a2a2a"/></svg>
<div class="a" style="left:15px;top:509.40px;width:27px;height:8.55px;background:#262626"></div>
<svg class="a" style="left:42px;top:511.18px" width="4" height="5" viewBox="0 0 4 5"><path d="M1 0.8L3 2.5L1 4.2" fill="none" stroke="#777" stroke-width="0.7"/></svg>
<div class="a" style="left:48px;top:509.70px;width:8.2px;height:7.95px;background:#a8d8d4"></div>
<div class="t" style="left:60px;top:510.28px;font-size:6.4px;color:#8e8e8e">12</div>
<svg class="a" style="left:77.5px;top:510.68px" width="6" height="6" viewBox="0 0 6 6"><path d="M3 0.2L3.75 2.1L5.8 2.2L4.2 3.5L4.75 5.6L3 4.45L1.25 5.6L1.8 3.5L0.2 2.2L2.25 2.1Z" fill="#d0d0d0"/></svg>
<div class="t" style="width:63.6px;overflow:hidden;left:88px;top:510.28px;font-size:6.8px;color:#c4c4c4;letter-spacing:-0.12px">chain holeアウトライン</div>
<svg class="a" style="left:174px;top:509.68px" width="30" height="8" viewBox="0 0 30 8"><path d="M0.5 6.5V4.5Q3.5 0 6.5 4.5V6.5ZM0 6.5H7" fill="#c8c8c8"/><path d="M12.5 1.5L15 4L12.5 6.5L10 4Z" fill="#777"/><path d="M18.5 7L24.5 1" stroke="#d0d0d0" stroke-width="0.9"/></svg>
<div class="a" style="left:217.5px;top:509.40px;width:26px;height:8.55px;background:#262626"></div>
<svg class="a" style="left:253px;top:510.18px" width="8" height="7" viewBox="0 0 8 7"><path d="M4 6.5Q0.5 6.5 0.5 3.5Q0.5 0.5 4 0.5Q7 0.5 7 3Q7 5 4.5 5Q2.5 5 2.5 3.5Q2.5 2.3 4 2.3" fill="none" stroke="#8a8a8a" stroke-width="0.9"/></svg>
<div class="a" style="left:264.5px;top:509.40px;width:48px;height:8.55px;background:#232323"></div>
<div class="t" style="left:266.5px;top:510.28px;font-size:6.8px;color:#c8c8c8;width:40px;overflow:hidden">13. chain circ</div>
<svg class="a" style="left:305.5px;top:511.68px" width="6" height="4" viewBox="0 0 6 4"><path d="M1 1L3 3L5 1" fill="none" stroke="#999" stroke-width="0.8"/></svg>
<div class="a" style="left:529px;top:507.70px;width:523.5px;height:10.95px;background:#7d9597;border-top:0.9px solid #23282a;border-bottom:0.9px solid #23282a"></div>
<div class="a" style="left:1.8px;top:528.90px;width:1054.5px;height:0.9px;background:#2f2f2f"></div>
<svg class="a" style="left:3.5px;top:521.73px" width="8" height="5" viewBox="0 0 8 5"><path d="M0.3 2.5Q4 -1 7.7 2.5Q4 6 0.3 2.5Z" fill="#d0d0d0"/><circle cx="4" cy="2.5" r="1.1" fill="#2a2a2a"/></svg>
<div class="a" style="left:15px;top:519.95px;width:27px;height:8.55px;background:#262626"></div>
<svg class="a" style="left:42px;top:521.73px" width="4" height="5" viewBox="0 0 4 5"><path d="M1 0.8L3 2.5L1 4.2" fill="none" stroke="#777" stroke-width="0.7"/></svg>
<div class="a" style="left:48px;top:520.25px;width:8.2px;height:7.95px;background:#a8d8d4"></div>
<div class="t" style="left:60px;top:520.83px;font-size:6.4px;color:#8e8e8e">13</div>
<svg class="a" style="left:77.5px;top:521.23px" width="6" height="6" viewBox="0 0 6 6"><path d="M3 0.2L3.75 2.1L5.8 2.2L4.2 3.5L4.75 5.6L3 4.45L1.25 5.6L1.8 3.5L0.2 2.2L2.25 2.1Z" fill="#d0d0d0"/></svg>
<div class="t" style="width:67.3px;overflow:hidden;left:88px;top:520.83px;font-size:6.8px;color:#c4c4c4;letter-spacing:-0.12px">chain circleアウトライン</div>
<svg class="a" style="left:174px;top:520.23px" width="30" height="8" viewBox="0 0 30 8"><path d="M0.5 6.5V4.5Q3.5 0 6.5 4.5V6.5ZM0 6.5H7" fill="#c8c8c8"/><path d="M12.5 1.5L15 4L12.5 6.5L10 4Z" fill="#777"/><path d="M18.5 7L24.5 1" stroke="#d0d0d0" stroke-width="0.9"/></svg>
<div class="a" style="left:217.5px;top:519.95px;width:26px;height:8.55px;background:#262626"></div>
<svg class="a" style="left:253px;top:520.73px" width="8" height="7" viewBox="0 0 8 7"><path d="M4 6.5Q0.5 6.5 0.5 3.5Q0.5 0.5 4 0.5Q7 0.5 7 3Q7 5 4.5 5Q2.5 5 2.5 3.5Q2.5 2.3 4 2.3" fill="none" stroke="#8a8a8a" stroke-width="0.9"/></svg>
<div class="a" style="left:264.5px;top:519.95px;width:48px;height:8.55px;background:#232323"></div>
<div class="t" style="left:266.5px;top:520.83px;font-size:6.8px;color:#c8c8c8;width:40px;overflow:hidden">なし</div>
<svg class="a" style="left:305.5px;top:522.23px" width="6" height="4" viewBox="0 0 6 4"><path d="M1 1L3 3L5 1" fill="none" stroke="#999" stroke-width="0.8"/></svg>
<div class="a" style="left:529px;top:518.25px;width:523.5px;height:10.95px;background:#7d9597;border-top:0.9px solid #23282a;border-bottom:0.9px solid #23282a"></div>
<div class="a" style="left:1.8px;top:539.45px;width:1054.5px;height:0.9px;background:#2f2f2f"></div>
<svg class="a" style="left:3.5px;top:532.27px" width="8" height="5" viewBox="0 0 8 5"><path d="M0.3 2.5Q4 -1 7.7 2.5Q4 6 0.3 2.5Z" fill="#d0d0d0"/><circle cx="4" cy="2.5" r="1.1" fill="#2a2a2a"/></svg>
<div class="a" style="left:15px;top:530.50px;width:27px;height:8.55px;background:#262626"></div>
<svg class="a" style="left:42px;top:532.27px" width="4" height="5" viewBox="0 0 4 5"><path d="M1 0.8L3 2.5L1 4.2" fill="none" stroke="#777" stroke-width="0.7"/></svg>
<div class="a" style="left:48px;top:530.80px;width:8.2px;height:7.95px;background:#a8d8d4"></div>
<div class="t" style="left:60px;top:531.38px;font-size:6.4px;color:#8e8e8e">14</div>
<svg class="a" style="left:77.5px;top:531.77px" width="6" height="6" viewBox="0 0 6 6"><path d="M3 0.2L3.75 2.1L5.8 2.2L4.2 3.5L4.75 5.6L3 4.45L1.25 5.6L1.8 3.5L0.2 2.2L2.25 2.1Z" fill="#d0d0d0"/></svg>
<div class="t" style="width:48.2px;overflow:hidden;left:88px;top:531.38px;font-size:6.8px;color:#c4c4c4;letter-spacing:-0.12px">chainアウトライン</div>
<svg class="a" style="left:174px;top:530.77px" width="30" height="8" viewBox="0 0 30 8"><path d="M0.5 6.5V4.5Q3.5 0 6.5 4.5V6.5ZM0 6.5H7" fill="#c8c8c8"/><path d="M12.5 1.5L15 4L12.5 6.5L10 4Z" fill="#777"/><path d="M18.5 7L24.5 1" stroke="#d0d0d0" stroke-width="0.9"/></svg>
<div class="a" style="left:217.5px;top:530.50px;width:26px;height:8.55px;background:#262626"></div>
<svg class="a" style="left:253px;top:531.27px" width="8" height="7" viewBox="0 0 8 7"><path d="M4 6.5Q0.5 6.5 0.5 3.5Q0.5 0.5 4 0.5Q7 0.5 7 3Q7 5 4.5 5Q2.5 5 2.5 3.5Q2.5 2.3 4 2.3" fill="none" stroke="#8a8a8a" stroke-width="0.9"/></svg>
<div class="a" style="left:264.5px;top:530.50px;width:48px;height:8.55px;background:#232323"></div>
<div class="t" style="left:266.5px;top:531.38px;font-size:6.8px;color:#c8c8c8;width:40px;overflow:hidden">なし</div>
<svg class="a" style="left:305.5px;top:532.77px" width="6" height="4" viewBox="0 0 6 4"><path d="M1 1L3 3L5 1" fill="none" stroke="#999" stroke-width="0.8"/></svg>
<div class="a" style="left:529px;top:528.80px;width:523.5px;height:10.95px;background:#7d9597;border-top:0.9px solid #23282a;border-bottom:0.9px solid #23282a"></div>
<div class="a" style="left:1.8px;top:550.00px;width:1054.5px;height:0.9px;background:#2f2f2f"></div>
<svg class="a" style="left:3.5px;top:542.82px" width="8" height="5" viewBox="0 0 8 5"><path d="M0.3 2.5Q4 -1 7.7 2.5Q4 6 0.3 2.5Z" fill="#d0d0d0"/><circle cx="4" cy="2.5" r="1.1" fill="#2a2a2a"/></svg>
<div class="a" style="left:15px;top:541.05px;width:27px;height:8.55px;background:#262626"></div>
<svg class="a" style="left:42px;top:542.82px" width="4" height="5" viewBox="0 0 4 5"><path d="M1 0.8L3 2.5L1 4.2" fill="none" stroke="#777" stroke-width="0.7"/></svg>
<div class="a" style="left:48px;top:541.35px;width:8.2px;height:7.95px;background:#ede85a"></div>
<div class="t" style="left:60px;top:541.92px;font-size:6.4px;color:#8e8e8e">15</div>
<svg class="a" style="left:77.5px;top:542.32px" width="6" height="6" viewBox="0 0 6 6"><path d="M3 0.2L3.75 2.1L5.8 2.2L4.2 3.5L4.75 5.6L3 4.45L1.25 5.6L1.8 3.5L0.2 2.2L2.25 2.1Z" fill="#d0d0d0"/></svg>
<div class="t" style="width:66.6px;overflow:hidden;left:88px;top:541.92px;font-size:6.8px;color:#c4c4c4;letter-spacing:-0.12px">back wheelアウトライン</div>
<svg class="a" style="left:174px;top:541.32px" width="30" height="8" viewBox="0 0 30 8"><path d="M0.5 6.5V4.5Q3.5 0 6.5 4.5V6.5ZM0 6.5H7" fill="#c8c8c8"/><path d="M12.5 1.5L15 4L12.5 6.5L10 4Z" fill="#777"/><path d="M18.5 7L24.5 1" stroke="#d0d0d0" stroke-width="0.9"/></svg>
<div class="a" style="left:217.5px;top:541.05px;width:26px;height:8.55px;background:#262626"></div>
<svg class="a" style="left:253px;top:541.82px" width="8" height="7" viewBox="0 0 8 7"><path d="M4 6.5Q0.5 6.5 0.5 3.5Q0.5 0.5 4 0.5Q7 0.5 7 3Q7 5 4.5 5Q2.5 5 2.5 3.5Q2.5 2.3 4 2.3" fill="none" stroke="#8a8a8a" stroke-width="0.9"/></svg>
<div class="a" style="left:264.5px;top:541.05px;width:48px;height:8.55px;background:#232323"></div>
<div class="t" style="left:266.5px;top:541.92px;font-size:6.8px;color:#c8c8c8;width:40px;overflow:hidden">なし</div>
<svg class="a" style="left:305.5px;top:543.32px" width="6" height="4" viewBox="0 0 6 4"><path d="M1 1L3 3L5 1" fill="none" stroke="#999" stroke-width="0.8"/></svg>
<div class="a" style="left:328px;top:539.35px;width:724.5px;height:10.95px;background:#99924a;border-top:0.9px solid #23282a;border-bottom:0.9px solid #23282a"></div>
<div class="a" style="left:1.8px;top:560.55px;width:1054.5px;height:0.9px;background:#2f2f2f"></div>
<svg class="a" style="left:3.5px;top:553.38px" width="8" height="5" viewBox="0 0 8 5"><path d="M0.3 2.5Q4 -1 7.7 2.5Q4 6 0.3 2.5Z" fill="#d0d0d0"/><circle cx="4" cy="2.5" r="1.1" fill="#2a2a2a"/></svg>
<div class="a" style="left:15px;top:551.60px;width:27px;height:8.55px;background:#262626"></div>
<svg class="a" style="left:42px;top:553.38px" width="4" height="5" viewBox="0 0 4 5"><path d="M1 0.8L3 2.5L1 4.2" fill="none" stroke="#777" stroke-width="0.7"/></svg>
<div class="a" style="left:48px;top:551.90px;width:8.2px;height:7.95px;background:#ede85a"></div>
<div class="t" style="left:60px;top:552.48px;font-size:6.4px;color:#8e8e8e">16</div>
<svg class="a" style="left:77.5px;top:552.88px" width="6" height="6" viewBox="0 0 6 6"><path d="M3 0.2L3.75 2.1L5.8 2.2L4.2 3.5L4.75 5.6L3 4.45L1.25 5.6L1.8 3.5L0.2 2.2L2.25 2.1Z" fill="#d0d0d0"/></svg>
<div class="t" style="width:67.5px;overflow:hidden;left:88px;top:552.48px;font-size:6.8px;color:#c4c4c4;letter-spacing:-0.12px">back fenderアウトライン</div>
<svg class="a" style="left:174px;top:551.88px" width="30" height="8" viewBox="0 0 30 8"><path d="M0.5 6.5V4.5Q3.5 0 6.5 4.5V6.5ZM0 6.5H7" fill="#c8c8c8"/><path d="M12.5 1.5L15 4L12.5 6.5L10 4Z" fill="#777"/><path d="M18.5 7L24.5 1" stroke="#d0d0d0" stroke-width="0.9"/></svg>
<div class="a" style="left:217.5px;top:551.60px;width:26px;height:8.55px;background:#262626"></div>
<svg class="a" style="left:253px;top:552.38px" width="8" height="7" viewBox="0 0 8 7"><path d="M4 6.5Q0.5 6.5 0.5 3.5Q0.5 0.5 4 0.5Q7 0.5 7 3Q7 5 4.5 5Q2.5 5 2.5 3.5Q2.5 2.3 4 2.3" fill="none" stroke="#8a8a8a" stroke-width="0.9"/></svg>
<div class="a" style="left:264.5px;top:551.60px;width:48px;height:8.55px;background:#232323"></div>
<div class="t" style="left:266.5px;top:552.48px;font-size:6.8px;color:#c8c8c8;width:40px;overflow:hidden">15. back whe</div>
<svg class="a" style="left:305.5px;top:553.88px" width="6" height="4" viewBox="0 0 6 4"><path d="M1 1L3 3L5 1" fill="none" stroke="#999" stroke-width="0.8"/></svg>
<div class="a" style="left:328px;top:549.90px;width:724.5px;height:10.95px;background:#99924a;border-top:0.9px solid #23282a;border-bottom:0.9px solid #23282a"></div>
<div class="a" style="left:1.8px;top:571.10px;width:1054.5px;height:0.9px;background:#2f2f2f"></div>
<svg class="a" style="left:3.5px;top:563.93px" width="8" height="5" viewBox="0 0 8 5"><path d="M0.3 2.5Q4 -1 7.7 2.5Q4 6 0.3 2.5Z" fill="#d0d0d0"/><circle cx="4" cy="2.5" r="1.1" fill="#2a2a2a"/></svg>
<div class="a" style="left:15px;top:562.15px;width:27px;height:8.55px;background:#262626"></div>
<svg class="a" style="left:42px;top:563.93px" width="4" height="5" viewBox="0 0 4 5"><path d="M1 0.8L3 2.5L1 4.2" fill="none" stroke="#777" stroke-width="0.7"/></svg>
<div class="a" style="left:48px;top:562.45px;width:8.2px;height:7.95px;background:#ede85a"></div>
<div class="t" style="left:60px;top:563.03px;font-size:6.4px;color:#8e8e8e">17</div>
<svg class="a" style="left:77.5px;top:563.43px" width="6" height="6" viewBox="0 0 6 6"><path d="M3 0.2L3.75 2.1L5.8 2.2L4.2 3.5L4.75 5.6L3 4.45L1.25 5.6L1.8 3.5L0.2 2.2L2.25 2.1Z" fill="#d0d0d0"/></svg>
<div class="t" style="width:67.6px;overflow:hidden;left:88px;top:563.03px;font-size:6.8px;color:#c4c4c4;letter-spacing:-0.12px">back spokeアウトライン</div>
<svg class="a" style="left:174px;top:562.43px" width="30" height="8" viewBox="0 0 30 8"><path d="M0.5 6.5V4.5Q3.5 0 6.5 4.5V6.5ZM0 6.5H7" fill="#c8c8c8"/><path d="M12.5 1.5L15 4L12.5 6.5L10 4Z" fill="#777"/><path d="M18.5 7L24.5 1" stroke="#d0d0d0" stroke-width="0.9"/></svg>
<div class="a" style="left:217.5px;top:562.15px;width:26px;height:8.55px;background:#262626"></div>
<svg class="a" style="left:253px;top:562.93px" width="8" height="7" viewBox="0 0 8 7"><path d="M4 6.5Q0.5 6.5 0.5 3.5Q0.5 0.5 4 0.5Q7 0.5 7 3Q7 5 4.5 5Q2.5 5 2.5 3.5Q2.5 2.3 4 2.3" fill="none" stroke="#8a8a8a" stroke-width="0.9"/></svg>
<div class="a" style="left:264.5px;top:562.15px;width:48px;height:8.55px;background:#232323"></div>
<div class="t" style="left:266.5px;top:563.03px;font-size:6.8px;color:#c8c8c8;width:40px;overflow:hidden">15. back whe</div>
<svg class="a" style="left:305.5px;top:564.43px" width="6" height="4" viewBox="0 0 6 4"><path d="M1 1L3 3L5 1" fill="none" stroke="#999" stroke-width="0.8"/></svg>
<div class="a" style="left:328px;top:560.45px;width:724.5px;height:10.95px;background:#99924a;border-top:0.9px solid #23282a;border-bottom:0.9px solid #23282a"></div>
<div class="a" style="left:1.8px;top:581.65px;width:1054.5px;height:0.9px;background:#2f2f2f"></div>
<svg class="a" style="left:3.5px;top:574.48px" width="8" height="5" viewBox="0 0 8 5"><path d="M0.3 2.5Q4 -1 7.7 2.5Q4 6 0.3 2.5Z" fill="#d0d0d0"/><circle cx="4" cy="2.5" r="1.1" fill="#2a2a2a"/></svg>
<div class="a" style="left:15px;top:572.70px;width:27px;height:8.55px;background:#262626"></div>
<svg class="a" style="left:42px;top:574.48px" width="4" height="5" viewBox="0 0 4 5"><path d="M1 0.8L3 2.5L1 4.2" fill="none" stroke="#777" stroke-width="0.7"/></svg>
<div class="a" style="left:48px;top:573.00px;width:8.2px;height:7.95px;background:#ede85a"></div>
<div class="t" style="left:60px;top:573.58px;font-size:6.4px;color:#8e8e8e">18</div>
<svg class="a" style="left:77.5px;top:573.98px" width="6" height="6" viewBox="0 0 6 6"><path d="M3 0.2L3.75 2.1L5.8 2.2L4.2 3.5L4.75 5.6L3 4.45L1.25 5.6L1.8 3.5L0.2 2.2L2.25 2.1Z" fill="#d0d0d0"/></svg>
<div class="t" style="width:72.5px;overflow:hidden;left:88px;top:573.58px;font-size:6.8px;color:#c4c4c4;letter-spacing:-0.12px">back shadowアウトライン</div>
<svg class="a" style="left:174px;top:572.98px" width="30" height="8" viewBox="0 0 30 8"><path d="M0.5 6.5V4.5Q3.5 0 6.5 4.5V6.5ZM0 6.5H7" fill="#c8c8c8"/><path d="M12.5 1.5L15 4L12.5 6.5L10 4Z" fill="#777"/><path d="M18.5 7L24.5 1" stroke="#d0d0d0" stroke-width="0.9"/></svg>
<div class="a" style="left:217.5px;top:572.70px;width:26px;height:8.55px;background:#262626"></div>
<svg class="a" style="left:253px;top:573.48px" width="8" height="7" viewBox="0 0 8 7"><path d="M4 6.5Q0.5 6.5 0.5 3.5Q0.5 0.5 4 0.5Q7 0.5 7 3Q7 5 4.5 5Q2.5 5 2.5 3.5Q2.5 2.3 4 2.3" fill="none" stroke="#8a8a8a" stroke-width="0.9"/></svg>
<div class="a" style="left:264.5px;top:572.70px;width:48px;height:8.55px;background:#232323"></div>
<div class="t" style="left:266.5px;top:573.58px;font-size:6.8px;color:#c8c8c8;width:40px;overflow:hidden">15. back whe</div>
<svg class="a" style="left:305.5px;top:574.98px" width="6" height="4" viewBox="0 0 6 4"><path d="M1 1L3 3L5 1" fill="none" stroke="#999" stroke-width="0.8"/></svg>
<div class="a" style="left:328px;top:571.00px;width:724.5px;height:10.95px;background:#99924a;border-top:0.9px solid #23282a;border-bottom:0.9px solid #23282a"></div>
<div class="a" style="left:1.8px;top:592.20px;width:1054.5px;height:0.9px;background:#2f2f2f"></div>
<svg class="a" style="left:3.5px;top:585.02px" width="8" height="5" viewBox="0 0 8 5"><path d="M0.3 2.5Q4 -1 7.7 2.5Q4 6 0.3 2.5Z" fill="#d0d0d0"/><circle cx="4" cy="2.5" r="1.1" fill="#2a2a2a"/></svg>
<div class="a" style="left:15px;top:583.25px;width:27px;height:8.55px;background:#262626"></div>
<svg class="a" style="left:42px;top:585.02px" width="4" height="5" viewBox="0 0 4 5"><path d="M1 0.8L3 2.5L1 4.2" fill="none" stroke="#777" stroke-width="0.7"/></svg>
<div class="a" style="left:48px;top:583.55px;width:8.2px;height:7.95px;background:#d0483e"></div>
<div class="t" style="left:60px;top:584.12px;font-size:6.4px;color:#8e8e8e">19</div>
<svg class="a" style="left:77.5px;top:584.52px" width="6" height="6" viewBox="0 0 6 6"><path d="M3 0.2L3.75 2.1L5.8 2.2L4.2 3.5L4.75 5.6L3 4.45L1.25 5.6L1.8 3.5L0.2 2.2L2.25 2.1Z" fill="#d0d0d0"/></svg>
<div class="t" style="width:64.5px;overflow:hidden;left:88px;top:584.12px;font-size:6.8px;color:#c4c4c4;letter-spacing:-0.12px">front wheelアウトライン</div>
<svg class="a" style="left:174px;top:583.52px" width="30" height="8" viewBox="0 0 30 8"><path d="M0.5 6.5V4.5Q3.5 0 6.5 4.5V6.5ZM0 6.5H7" fill="#c8c8c8"/><path d="M12.5 1.5L15 4L12.5 6.5L10 4Z" fill="#777"/><path d="M18.5 7L24.5 1" stroke="#d0d0d0" stroke-width="0.9"/></svg>
<div class="a" style="left:217.5px;top:583.25px;width:26px;height:8.55px;background:#262626"></div>
<svg class="a" style="left:253px;top:584.02px" width="8" height="7" viewBox="0 0 8 7"><path d="M4 6.5Q0.5 6.5 0.5 3.5Q0.5 0.5 4 0.5Q7 0.5 7 3Q7 5 4.5 5Q2.5 5 2.5 3.5Q2.5 2.3 4 2.3" fill="none" stroke="#8a8a8a" stroke-width="0.9"/></svg>
<div class="a" style="left:264.5px;top:583.25px;width:48px;height:8.55px;background:#232323"></div>
<div class="t" style="left:266.5px;top:584.12px;font-size:6.8px;color:#c8c8c8;width:40px;overflow:hidden">なし</div>
<svg class="a" style="left:305.5px;top:585.52px" width="6" height="4" viewBox="0 0 6 4"><path d="M1 1L3 3L5 1" fill="none" stroke="#999" stroke-width="0.8"/></svg>
<div class="a" style="left:328px;top:581.55px;width:724.5px;height:10.95px;background:#8a3c45;border-top:0.9px solid #23282a;border-bottom:0.9px solid #23282a"></div>
<div class="a" style="left:312.5px;top:392.35px;width:10px;height:197.15px;background:#303030;opacity:0.6"></div>
<div class="a" style="left:312.5px;top:381.80px;width:10px;height:10.55px;background:#565656"></div>
<div class="a" style="left:322.5px;top:381.80px;width:1.2px;height:207.70px;background:#161616"></div>
<div class="a" style="left:1056.3px;top:367px;width:7.5px;height:222.5px;background:#2c2c2c"></div><div class="a" style="left:1057.5px;top:553px;width:5px;height:36px;background:#1a1a1a"></div>
<div class="a" style="left:322.5px;top:350px;width:733.8px;height:31.8px;background:#1f1f1f"></div>
<div class="a" style="left:326px;top:354.6px;width:730px;height:4px;background:#787878"></div>
<div class="a" style="left:325px;top:353.6px;width:3px;height:6px;background:#3a86e0;border-radius:1.5px 0 0 1.5px"></div>
<div class="a" style="left:1053px;top:353.6px;width:3px;height:6px;background:#3a86e0;border-radius:0 1.5px 1.5px 0"></div>
<div class="a" style="left:326px;top:370.7px;width:730px;height:7.6px;background:#6b6b6b"></div>
<div class="a" style="left:324.5px;top:370.2px;width:3.5px;height:8.6px;background:#3a86e0;border-radius:2px 0 0 2px"></div>
<div class="a" style="left:1052.5px;top:370.2px;width:3.5px;height:8.6px;background:#3a86e0;border-radius:0 2px 2px 0"></div>
<div class="a" style="left:327px;top:378.6px;width:326px;height:2.4px;background:#2e9e3a"></div>
<div class="a" style="left:768.5px;top:378.6px;width:5px;height:2.4px;background:#2e9e3a"></div>

<div class="t" style="left:325.6px;top:359.6px;font-size:5.5px;font-weight:bold;color:#c0c0c0">00f</div>
<div class="a" style="left:328.5px;top:367px;width:0.6px;height:2px;background:#777"></div>
<div class="t" style="left:363.7px;top:359.6px;font-size:5.5px;font-weight:bold;color:#c0c0c0">10f</div>
<div class="a" style="left:368.6px;top:367px;width:0.6px;height:2px;background:#777"></div>
<div class="t" style="left:403.8px;top:359.6px;font-size:5.5px;font-weight:bold;color:#c0c0c0">20f</div>
<div class="a" style="left:408.7px;top:367px;width:0.6px;height:2px;background:#777"></div>
<div class="t" style="left:438.9px;top:359.6px;font-size:5.5px;font-weight:bold;color:#c0c0c0">01:00f</div>
<div class="a" style="left:448.8px;top:367px;width:0.6px;height:2px;background:#777"></div>
<div class="t" style="left:483.9px;top:359.6px;font-size:5.5px;font-weight:bold;color:#c0c0c0">10f</div>
<div class="a" style="left:488.9px;top:367px;width:0.6px;height:2px;background:#777"></div>
<div class="t" style="left:524.0px;top:359.6px;font-size:5.5px;font-weight:bold;color:#c0c0c0">20f</div>
<div class="a" style="left:529.0px;top:367px;width:0.6px;height:2px;background:#777"></div>
<div class="t" style="left:559.2px;top:359.6px;font-size:5.5px;font-weight:bold;color:#c0c0c0">02:00f</div>
<div class="a" style="left:569.1px;top:367px;width:0.6px;height:2px;background:#777"></div>
<div class="t" style="left:604.2px;top:359.6px;font-size:5.5px;font-weight:bold;color:#c0c0c0">10f</div>
<div class="a" style="left:609.2px;top:367px;width:0.6px;height:2px;background:#777"></div>
<div class="t" style="left:644.3px;top:359.6px;font-size:5.5px;font-weight:bold;color:#c0c0c0">20f</div>
<div class="a" style="left:649.3px;top:367px;width:0.6px;height:2px;background:#777"></div>
<div class="t" style="left:679.5px;top:359.6px;font-size:5.5px;font-weight:bold;color:#c0c0c0">03:00f</div>
<div class="a" style="left:689.4px;top:367px;width:0.6px;height:2px;background:#777"></div>
<div class="t" style="left:724.5px;top:359.6px;font-size:5.5px;font-weight:bold;color:#c0c0c0">10f</div>
<div class="a" style="left:729.5px;top:367px;width:0.6px;height:2px;background:#777"></div>
<div class="t" style="left:799.8px;top:359.6px;font-size:5.5px;font-weight:bold;color:#c0c0c0">04:00f</div>
<div class="a" style="left:809.7px;top:367px;width:0.6px;height:2px;background:#777"></div>
<div class="t" style="left:844.9px;top:359.6px;font-size:5.5px;font-weight:bold;color:#c0c0c0">10f</div>
<div class="a" style="left:849.8px;top:367px;width:0.6px;height:2px;background:#777"></div>
<div class="t" style="left:884.9px;top:359.6px;font-size:5.5px;font-weight:bold;color:#c0c0c0">20f</div>
<div class="a" style="left:889.9px;top:367px;width:0.6px;height:2px;background:#777"></div>
<div class="t" style="left:920.1px;top:359.6px;font-size:5.5px;font-weight:bold;color:#c0c0c0">05:00f</div>
<div class="a" style="left:930.0px;top:367px;width:0.6px;height:2px;background:#777"></div>
<div class="t" style="left:965.1px;top:359.6px;font-size:5.5px;font-weight:bold;color:#c0c0c0">10f</div>
<div class="a" style="left:970.1px;top:367px;width:0.6px;height:2px;background:#777"></div>
<div class="t" style="left:1005.2px;top:359.6px;font-size:5.5px;font-weight:bold;color:#c0c0c0">20f</div>
<div class="a" style="left:1010.2px;top:367px;width:0.6px;height:2px;background:#777"></div>
<div class="t" style="left:1043.7px;top:359.6px;font-size:5.5px;font-weight:bold;color:#c0c0c0">06:0</div>
<div class="a" style="left:1050.3px;top:367px;width:0.6px;height:2px;background:#777"></div>
<div class="a" style="left:770.3px;top:359px;width:0.8px;height:44px;background:#3a6ab0;opacity:0.35"></div>
<svg class="a" style="left:766.5px;top:359.5px" width="8.5" height="10" viewBox="0 0 8.5 10"><path d="M0.5 0.5H8V6L4.25 9.5L0.5 6Z" fill="#3b86e8"/><circle cx="4.25" cy="4.5" r="1.2" fill="#1d3a66"/></svg>

<svg class="a" style="left:646px;top:394.12px" width="8" height="7" viewBox="0 0 8 7"><path d="M4 0.5L7.5 3.5L4 6.5Z" fill="#ddd"/><path d="M4 0.5L0.5 3.5L4 6.5" fill="none" stroke="#ddd" stroke-width="0.8"/></svg>
<svg class="a" style="left:766.5px;top:393.62px" width="8" height="8" viewBox="0 0 8 8"><path d="M4 0.6L7.4 4L4 7.4L0.6 4Z" fill="#2a4f80" stroke="#3b86e8" stroke-width="1"/></svg>
<svg class="a" style="left:1056px;top:370px" width="8" height="16" viewBox="0 0 8 16"><path d="M1 1H7V5.5L4 8L1 5.5Z" fill="#ccc"/><path d="M4 10.5L7 13L4 15.5L1 13Z" fill="#ccc"/><circle cx="4" cy="3.5" r="1" fill="#666"/></svg>
<div class="a" style="left:1.8px;top:589.5px;width:1062px;height:7.5px;background:#1c1c1c"></div>
<svg class="a" style="left:3px;top:590px" width="45" height="7" viewBox="0 0 45 7"><rect x="2" y="0.5" width="5.5" height="5.5" fill="#2b6fc8"/><g fill="none" stroke="#bbb" stroke-width="0.8"><circle cx="16" cy="3.5" r="2.3"/><path d="M14 1L15 2.5"/><circle cx="26" cy="3.5" r="2.3"/><circle cx="26" cy="3.5" r="1"/><path d="M33 1.5H40M33 3.5H39M33 5.5H40"/></g></svg>
<div class="t" style="width:61.5px;overflow:hidden;left:58px;top:589.5px;font-size:6.4px;color:#a0a0a0;line-height:7.5px">フレームレンダリング時間</div>
<div class="t" style="left:127px;top:590px;font-size:5.6px;color:#5a9f7a;line-height:7.5px">1ms</div>
<div class="t" style="width:42.5px;overflow:hidden;left:188px;top:589.5px;font-size:6.4px;color:#777;line-height:7.5px">スイッチ / モード</div>
<div class="a" style="left:326px;top:593px;width:4px;height:0.9px;background:#bbb"></div>
<div class="a" style="left:336.5px;top:590.5px;width:5.5px;height:5.5px;border:1px solid #bbb;border-radius:50%"></div>
<div class="a" style="left:342px;top:593px;width:22px;height:0.7px;background:#444"></div>
<svg class="a" style="left:370px;top:590px" width="8" height="6" viewBox="0 0 8 6"><path d="M0.5 5.5L2.5 2.5L4 4L5.5 1L7.5 5.5Z" fill="#bbb"/></svg>

<!-- CONTEXT MENU -->
<div class="a" style="left:771.5px;top:395px;width:142px;height:177.5px;background:#f4f4f4;border-radius:3px;box-shadow:0 0.5px 2px rgba(0,0,0,0.35)"></div>
<div class="t" style="left:793px;top:399.9px;font-size:6.8px;color:#2a2a2a">100%</div>
<div class="t" style="width:27.5px;overflow:hidden;left:793px;top:412.4px;font-size:6.8px;color:#2a2a2a">値を編集...</div>
<div class="t" style="width:61.5px;overflow:hidden;left:793px;top:423.9px;font-size:6.8px;color:#2a2a2a">キーフレームの位置に移動</div>
<div class="a" style="left:776px;top:435.8px;width:134px;height:0.8px;background:#dedede"></div>
<div class="t" style="width:24.5px;overflow:hidden;left:793px;top:441.8px;font-size:6.8px;color:#2a2a2a">ラベル(L)</div>
<svg class="a" style="left:901.5px;top:442.7px" width="4" height="5" viewBox="0 0 4 5"><path d="M1 0.8L3 2.5L1 4.2" fill="none" stroke="#555" stroke-width="0.8"/></svg>
<div class="t" style="width:86.5px;overflow:hidden;left:793px;top:453.4px;font-size:6.8px;color:#2a2a2a">キーフレームのラベルグループを選択</div>
<svg class="a" style="left:901.5px;top:454.3px" width="4" height="5" viewBox="0 0 4 5"><path d="M1 0.8L3 2.5L1 4.2" fill="none" stroke="#555" stroke-width="0.8"/></svg>
<div class="a" style="left:776px;top:466.0px;width:134px;height:0.8px;background:#dedede"></div>
<div class="t" style="width:66.5px;overflow:hidden;left:793px;top:470.9px;font-size:6.8px;color:#2a2a2a">同じ値のキーフレームを選択</div>
<div class="t" style="width:56.5px;overflow:hidden;left:793px;top:482.8px;font-size:6.8px;color:#2a2a2a">前のキーフレームを選択</div>
<div class="t" style="width:61.5px;overflow:hidden;left:793px;top:494.6px;font-size:6.8px;color:#2a2a2a">後ろのキーフレームを選択</div>
<div class="a" style="left:776px;top:507.2px;width:134px;height:0.8px;background:#dedede"></div>
<div class="t" style="width:76.5px;overflow:hidden;left:793px;top:512.6px;font-size:6.8px;color:#2a2a2a">停止したキーフレームの切り替え</div>
<div class="t" style="width:52.5px;overflow:hidden;left:793px;top:524.2px;font-size:6.8px;color:#2a2a2a">キーフレーム補間法...</div>
<div class="t" style="width:36.5px;overflow:hidden;left:793px;top:536.1px;font-size:6.8px;color:#a0a0a0">時間ロービング</div>
<div class="t" style="width:47.5px;overflow:hidden;left:793px;top:548.2px;font-size:6.8px;color:#2a2a2a">キーフレーム速度...</div>
<div class="t" style="width:41.5px;overflow:hidden;left:793px;top:560.2px;font-size:6.8px;color:#2a2a2a">キーフレーム補助</div>
<svg class="a" style="left:901.5px;top:561.1px" width="4" height="5" viewBox="0 0 4 5"><path d="M1 0.8L3 2.5L1 4.2" fill="none" stroke="#555" stroke-width="0.8"/></svg>
<svg class="a" style="left:771px;top:409px" width="8" height="12" viewBox="0 0 8 12"><path d="M0.6 0.6V9.5L2.8 7.6L4.4 11.2L5.8 10.6L4.3 7.1H7.2Z" fill="#fff" stroke="#333" stroke-width="0.7"/></svg>
</body></html>
